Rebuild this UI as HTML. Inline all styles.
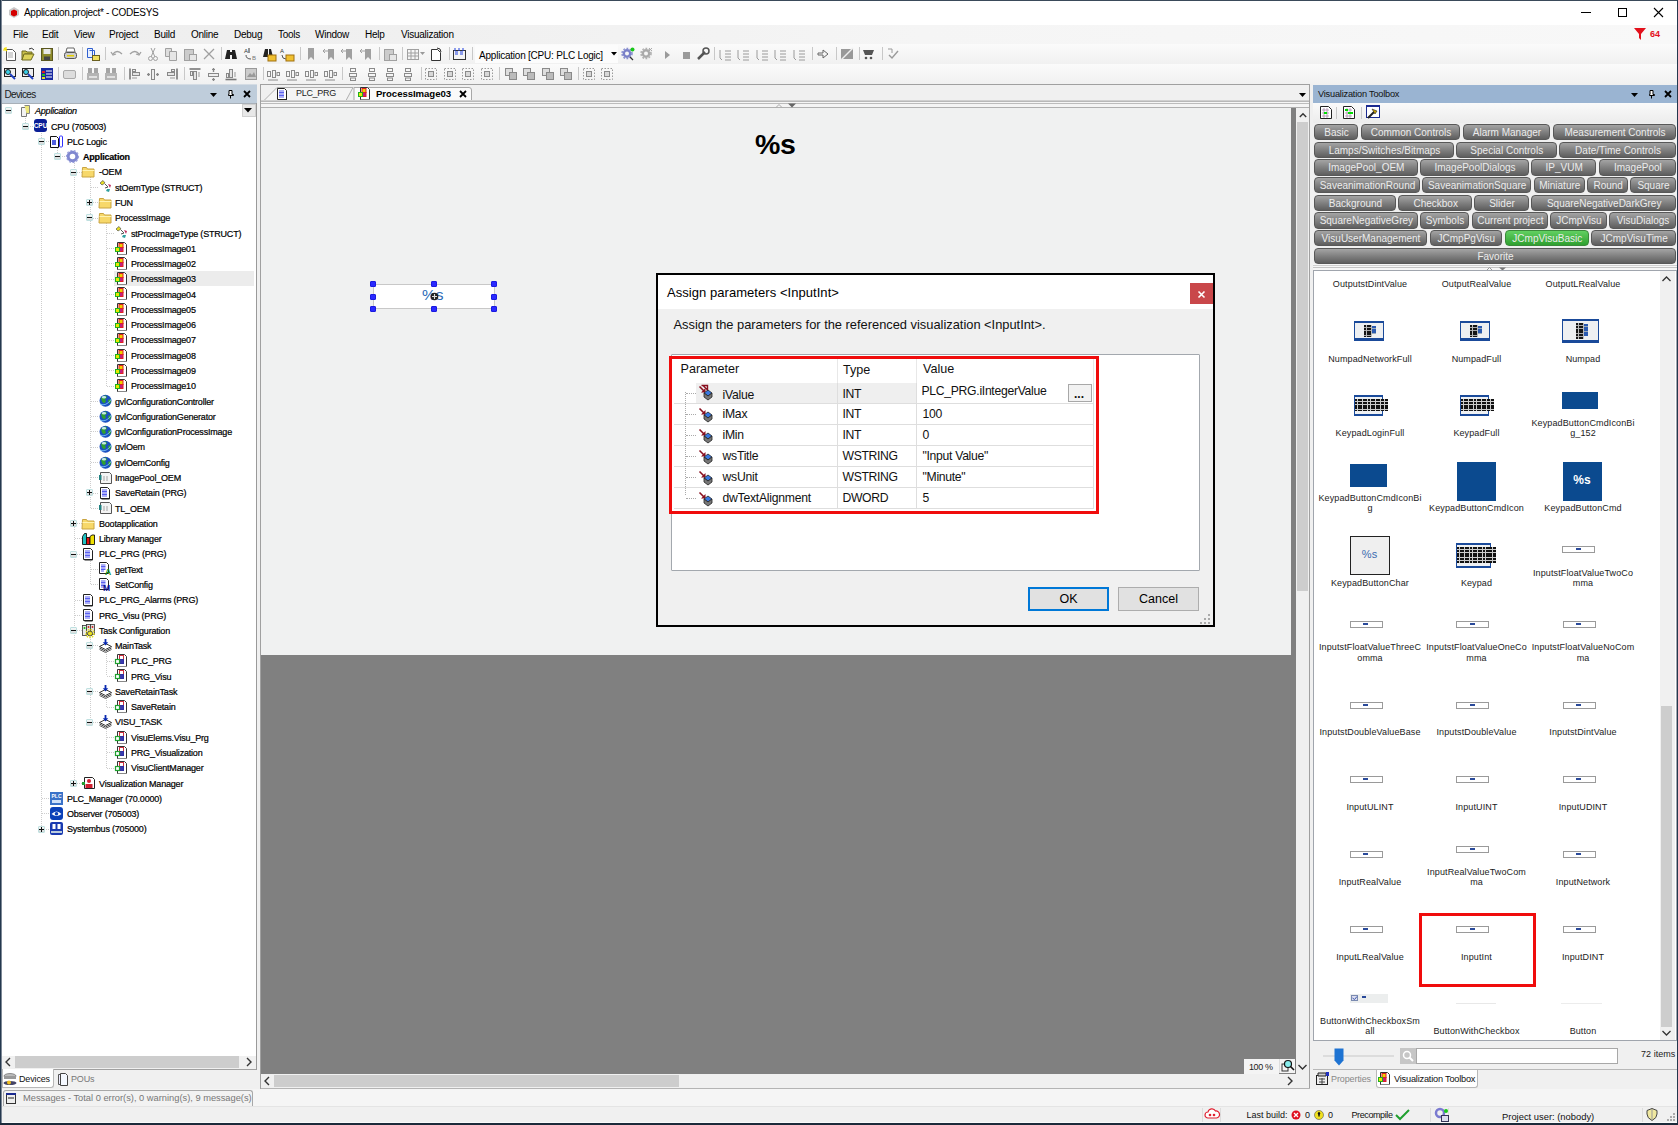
<!DOCTYPE html><html><head><meta charset="utf-8"><style>
html,body{margin:0;padding:0;}
body{width:1678px;height:1125px;position:relative;overflow:hidden;background:#f0f0f0;font-family:"Liberation Sans",sans-serif;color:#000;}
div{position:absolute;box-sizing:border-box;}
.t{position:absolute;white-space:nowrap;}
</style></head><body>

<div style="left:0px;top:0px;width:1678px;height:25px;background:#fff;"></div>
<div style="left:0px;top:25px;width:1678px;height:19px;background:linear-gradient(90deg,#eeeeee 0,#f0f0f0 25%,#f5f5f5 55%,#f8f8f8 100%);"></div>
<div style="left:0px;top:44px;width:1678px;height:20px;background:linear-gradient(#fbfbfb,#f1f1f1);"></div>
<div style="left:0px;top:64px;width:1678px;height:20px;background:linear-gradient(#fbfbfb,#f1f1f1);"></div>
<svg style="position:absolute;overflow:visible;left:7px;top:5px;" width="14" height="14" viewBox="0 0 14 14"><path d="M2 5 L7 2 L12 5 L12 10 L7 13 L2 10Z" fill="#c9c9c9"/><path d="M4 6 L7 4.5 L10 6 L10 10 L7 11.5 L4 10Z" fill="#d40000"/></svg>
<span class="t " style="left:24px;top:7.54px;font-size:10px;line-height:10px;letter-spacing:-0.3px;color:#000;">Application.project* - CODESYS</span>
<div style="left:1581px;top:12px;width:10px;height:1px;background:#000;"></div>
<div style="left:1618px;top:8px;width:9px;height:9px;border:1px solid #000;"></div>
<svg style="position:absolute;overflow:visible;left:1653px;top:7px;" width="11" height="11" viewBox="0 0 11 11"><path d="M1 1L10 10M10 1L1 10" stroke="#000" stroke-width="1.1"/></svg>
<svg style="position:absolute;overflow:visible;left:1634px;top:27px;" width="13" height="14" viewBox="0 0 13 14"><path d="M0 1 L12 1 L7 7 L7 13 L5 11 L5 7Z" fill="#e3101b"/></svg>
<span class="t " style="left:1650px;top:30.38px;font-size:9px;line-height:9px;letter-spacing:0px;color:#e3101b;font-weight:bold;">64</span>
<span class="t " style="left:13px;top:29.54px;font-size:10px;line-height:10px;letter-spacing:-0.25px;">File</span>
<span class="t " style="left:42px;top:29.54px;font-size:10px;line-height:10px;letter-spacing:-0.25px;">Edit</span>
<span class="t " style="left:74px;top:29.54px;font-size:10px;line-height:10px;letter-spacing:-0.25px;">View</span>
<span class="t " style="left:109px;top:29.54px;font-size:10px;line-height:10px;letter-spacing:-0.25px;">Project</span>
<span class="t " style="left:154px;top:29.54px;font-size:10px;line-height:10px;letter-spacing:-0.25px;">Build</span>
<span class="t " style="left:191px;top:29.54px;font-size:10px;line-height:10px;letter-spacing:-0.25px;">Online</span>
<span class="t " style="left:234px;top:29.54px;font-size:10px;line-height:10px;letter-spacing:-0.25px;">Debug</span>
<span class="t " style="left:278px;top:29.54px;font-size:10px;line-height:10px;letter-spacing:-0.25px;">Tools</span>
<span class="t " style="left:315px;top:29.54px;font-size:10px;line-height:10px;letter-spacing:-0.25px;">Window</span>
<span class="t " style="left:365px;top:29.54px;font-size:10px;line-height:10px;letter-spacing:-0.25px;">Help</span>
<span class="t " style="left:401px;top:29.54px;font-size:10px;line-height:10px;letter-spacing:-0.25px;">Visualization</span>
<svg style="position:absolute;overflow:visible;left:3px;top:47px;" width="15" height="15" viewBox="0 0 15 15"><path d="M3.5 2.5h6l3 3v8h-9z" fill="#fff" stroke="#555"/><path d="M5 6h5M5 8h5M5 10h5" stroke="#aaa"/><path d="M1 1l3 3M3 0v3M0 3h3" stroke="#f5e000" stroke-width="1.2"/></svg>
<svg style="position:absolute;overflow:visible;left:21px;top:47px;" width="15" height="15" viewBox="0 0 15 15"><path d="M1 4h4l1 1h5v2H4l-3 6z" fill="#c8c04a" stroke="#6e6a20"/><path d="M3 7h10l-3 6H1z" fill="#dcd35a" stroke="#6e6a20"/><path d="M8 2q3-2 5 1" stroke="#333" fill="none"/></svg>
<svg style="position:absolute;overflow:visible;left:40px;top:47px;" width="15" height="15" viewBox="0 0 15 15"><rect x="1.5" y="1.5" width="11" height="12" fill="#8d8a2c" stroke="#5a5720"/><rect x="3.5" y="2" width="7" height="5" fill="#e8e8e8"/><rect x="4" y="9.5" width="6" height="3.5" fill="#444"/></svg>
<svg style="position:absolute;overflow:visible;left:63px;top:47px;" width="15" height="15" viewBox="0 0 15 15"><path d="M4 1h7l1 4H3z" fill="#fff" stroke="#666"/><rect x="1.5" y="5.5" width="12" height="6" rx="2" fill="#ccc" stroke="#555"/><rect x="4" y="8" width="7" height="1.5" fill="#e5d000"/></svg>
<svg style="position:absolute;overflow:visible;left:86px;top:47px;" width="15" height="15" viewBox="0 0 15 15"><path d="M1.5 1.5h5v9h-5z" fill="#e8f0ff" stroke="#2f5fd0"/><path d="M3.5 3.5h5v7" fill="none" stroke="#2f5fd0"/><rect x="6.5" y="8.5" width="7" height="5" fill="#f0e060" stroke="#6a6020"/></svg>
<svg style="position:absolute;overflow:visible;left:110px;top:47px;" width="15" height="15" viewBox="0 0 15 15"><path d="M3 7q4-5 9 0" stroke="#a0a0a0" fill="none" stroke-width="1.3"/><path d="M1 5l2 3 3-1" stroke="#a0a0a0" fill="none" stroke-width="1.3"/></svg>
<svg style="position:absolute;overflow:visible;left:128px;top:47px;" width="15" height="15" viewBox="0 0 15 15"><path d="M2 7q5-5 9 0" stroke="#a0a0a0" fill="none" stroke-width="1.3"/><path d="M13 5l-2 3-3-1" stroke="#a0a0a0" fill="none" stroke-width="1.3"/></svg>
<svg style="position:absolute;overflow:visible;left:146px;top:47px;" width="15" height="15" viewBox="0 0 15 15"><path d="M5 1l4 9M9 1l-4 9" stroke="#a0a0a0"/><circle cx="4.5" cy="11.5" r="2" fill="none" stroke="#a0a0a0"/><circle cx="9.5" cy="11.5" r="2" fill="none" stroke="#a0a0a0"/></svg>
<svg style="position:absolute;overflow:visible;left:164px;top:47px;" width="15" height="15" viewBox="0 0 15 15"><path d="M1.5 1.5h6v8h-6z" fill="#ddd" stroke="#a0a0a0"/><path d="M5.5 4.5h7v9h-7z" fill="#e6e6e6" stroke="#a0a0a0"/></svg>
<svg style="position:absolute;overflow:visible;left:183px;top:47px;" width="15" height="15" viewBox="0 0 15 15"><rect x="1.5" y="2.5" width="9" height="11" fill="#ccc" stroke="#a0a0a0"/><rect x="6.5" y="7.5" width="7" height="6" fill="#e6e6e6" stroke="#a0a0a0"/></svg>
<svg style="position:absolute;overflow:visible;left:202px;top:47px;" width="15" height="15" viewBox="0 0 15 15"><path d="M2 2l10 10M12 2L2 12" stroke="#a0a0a0" stroke-width="1.3"/></svg>
<svg style="position:absolute;overflow:visible;left:224px;top:47px;" width="15" height="15" viewBox="0 0 15 15"><path d="M1 12l2-9h3v9zM13 12l-2-9H8v9z" fill="#222"/><rect x="5" y="5" width="4" height="3" fill="#222"/></svg>
<svg style="position:absolute;overflow:visible;left:243px;top:47px;" width="15" height="15" viewBox="0 0 15 15"><text x="1" y="6" font-size="6" font-family="Liberation Sans" fill="#333">A</text><text x="9" y="13" font-size="6" font-family="Liberation Sans" fill="#777">B</text><path d="M3 8q0 4 5 4" stroke="#555" fill="none"/><path d="M6 1v5" stroke="#333"/></svg>
<svg style="position:absolute;overflow:visible;left:262px;top:47px;" width="15" height="15" viewBox="0 0 15 15"><path d="M1 10l2-8h3v8zM11 10l-2-8H7v8z" fill="#222"/><rect x="6" y="8" width="8" height="6" fill="#f0c030" stroke="#a07010"/></svg>
<svg style="position:absolute;overflow:visible;left:280px;top:47px;" width="15" height="15" viewBox="0 0 15 15"><text x="0" y="6" font-size="6" font-family="Liberation Sans" fill="#333">A</text><path d="M2 8q0 4 4 4" stroke="#555" fill="none"/><rect x="6" y="8" width="8" height="6" fill="#f0c030" stroke="#a07010"/></svg>
<svg style="position:absolute;overflow:visible;left:304px;top:47px;" width="15" height="15" viewBox="0 0 15 15"><path d="M4 1h6v12l-3-3-3 3z" fill="#a0a0a0"/></svg>
<svg style="position:absolute;overflow:visible;left:322px;top:47px;" width="15" height="15" viewBox="0 0 15 15"><path d="M6 2h6v11l-3-3-3 3z" fill="#a0a0a0"/><path d="M1 4h5M1 4l2-2M1 4l2 2" stroke="#a0a0a0"/></svg>
<svg style="position:absolute;overflow:visible;left:340px;top:47px;" width="15" height="15" viewBox="0 0 15 15"><path d="M6 2h6v11l-3-3-3 3z" fill="#a0a0a0"/><path d="M1 4h5M1 4l2-2M1 4l2 2" stroke="#a0a0a0"/></svg>
<svg style="position:absolute;overflow:visible;left:359px;top:47px;" width="15" height="15" viewBox="0 0 15 15"><path d="M6 2h6v11l-3-3-3 3z" fill="#a0a0a0"/><path d="M1 4h5M1 4l2-2M1 4l2 2" stroke="#a0a0a0"/></svg>
<svg style="position:absolute;overflow:visible;left:383px;top:47px;" width="15" height="15" viewBox="0 0 15 15"><rect x="1.5" y="2.5" width="9" height="11" fill="#ccc" stroke="#a0a0a0"/><rect x="6.5" y="7.5" width="7" height="6" fill="#e6e6e6" stroke="#a0a0a0"/></svg>
<svg style="position:absolute;overflow:visible;left:406px;top:47px;" width="15" height="15" viewBox="0 0 15 15"><rect x="1.5" y="2.5" width="11" height="10" fill="none" stroke="#a0a0a0"/><path d="M1 6h12M1 9h12M5 3v10M9 3v10" stroke="#a0a0a0"/></svg>
<svg style="position:absolute;overflow:visible;left:429px;top:47px;" width="15" height="15" viewBox="0 0 15 15"><path d="M2.5 2.5h6l3 3v8h-9z" fill="#fff" stroke="#333"/><path d="M8 1q4 0 4 4" stroke="#333" fill="none"/></svg>
<svg style="position:absolute;overflow:visible;left:452px;top:47px;" width="15" height="15" viewBox="0 0 15 15"><rect x="1.5" y="3.5" width="12" height="9" fill="#f4f4f4" stroke="#333"/><path d="M3 5h3M8 5h3M3 7h3M8 7h3" stroke="#2040e0"/><path d="M3 1v3M7 1v3M11 1v3" stroke="#2040e0"/></svg>
<div style="left:58px;top:47px;width:1px;height:13px;background:#c8c8c8;"></div>
<div style="left:82px;top:47px;width:1px;height:13px;background:#c8c8c8;"></div>
<div style="left:105px;top:47px;width:1px;height:13px;background:#c8c8c8;"></div>
<div style="left:221px;top:47px;width:1px;height:13px;background:#c8c8c8;"></div>
<div style="left:300px;top:47px;width:1px;height:13px;background:#c8c8c8;"></div>
<div style="left:379px;top:47px;width:1px;height:13px;background:#c8c8c8;"></div>
<div style="left:402px;top:47px;width:1px;height:13px;background:#c8c8c8;"></div>
<div style="left:449px;top:47px;width:1px;height:13px;background:#c8c8c8;"></div>
<div style="left:472px;top:47px;width:1px;height:13px;background:#c8c8c8;"></div>
<svg style="position:absolute;overflow:visible;left:420px;top:52px;" width="6" height="4" viewBox="0 0 6 4"><path d="M0 0h5l-2.5 3z" fill="#999"/></svg>
<div style="left:475px;top:45px;width:143px;height:18px;background:#fcfcfc;"></div>
<span class="t " style="left:479px;top:50.53px;font-size:10px;line-height:10px;letter-spacing:-0.22px;">Application [CPU: PLC Logic]</span>
<svg style="position:absolute;overflow:visible;left:611px;top:52px;" width="6" height="4" viewBox="0 0 6 4"><path d="M0 0h6l-3 3.5z" fill="#000"/></svg>
<svg style="position:absolute;overflow:visible;left:621px;top:47px;" width="15" height="15" viewBox="0 0 15 15"><circle cx="6" cy="6.5" r="3.2" fill="none" stroke="#7a80c8" stroke-width="2.4"/><circle cx="6" cy="6.5" r="5" fill="none" stroke="#8a90d0" stroke-width="1.6" stroke-dasharray="1.8 1.4"/><circle cx="11.5" cy="2.5" r="2" fill="#18c818"/><path d="M9 10l3 3" stroke="#333" stroke-width="1.2"/></svg>
<svg style="position:absolute;overflow:visible;left:640px;top:47px;" width="15" height="15" viewBox="0 0 15 15"><circle cx="6" cy="6.5" r="3.2" fill="none" stroke="#aaa" stroke-width="2.4"/><circle cx="6" cy="6.5" r="5" fill="none" stroke="#b0b0b0" stroke-width="1.6" stroke-dasharray="1.8 1.4"/><path d="M9 1l3 3M12 1L9 4" stroke="#aaa"/></svg>
<svg style="position:absolute;overflow:visible;left:660px;top:47px;" width="15" height="15" viewBox="0 0 15 15"><path d="M5 4l5 4-5 4z" fill="#9a9a9a"/></svg>
<svg style="position:absolute;overflow:visible;left:679px;top:47px;" width="15" height="15" viewBox="0 0 15 15"><rect x="4" y="5" width="7" height="7" fill="#9a9a9a"/></svg>
<svg style="position:absolute;overflow:visible;left:696px;top:47px;" width="15" height="15" viewBox="0 0 15 15"><path d="M2 12l7-7" stroke="#555" stroke-width="2.5"/><circle cx="10" cy="4" r="3" fill="none" stroke="#555" stroke-width="1.5"/></svg>
<svg style="position:absolute;overflow:visible;left:718px;top:47px;" width="15" height="15" viewBox="0 0 15 15"><path d="M7 4h6M7 7h6M7 10h6M7 13h6" stroke="#9a9a9a"/><path d="M2 3v8l2 2" stroke="#9a9a9a" fill="none"/></svg>
<svg style="position:absolute;overflow:visible;left:736px;top:47px;" width="15" height="15" viewBox="0 0 15 15"><path d="M7 4h6M7 7h6M7 10h6M7 13h6" stroke="#9a9a9a"/><path d="M2 3v8l2 2" stroke="#9a9a9a" fill="none"/></svg>
<svg style="position:absolute;overflow:visible;left:755px;top:47px;" width="15" height="15" viewBox="0 0 15 15"><path d="M7 4h6M7 7h6M7 10h6M7 13h6" stroke="#9a9a9a"/><path d="M2 3v8l2 2" stroke="#9a9a9a" fill="none"/></svg>
<svg style="position:absolute;overflow:visible;left:773px;top:47px;" width="15" height="15" viewBox="0 0 15 15"><path d="M7 4h6M7 7h6M7 10h6M7 13h6" stroke="#9a9a9a"/><path d="M2 3v8l2 2" stroke="#9a9a9a" fill="none"/></svg>
<svg style="position:absolute;overflow:visible;left:792px;top:47px;" width="15" height="15" viewBox="0 0 15 15"><path d="M7 4h6M7 7h6M7 10h6M7 13h6" stroke="#9a9a9a"/><path d="M2 3v8l2 2" stroke="#9a9a9a" fill="none"/></svg>
<svg style="position:absolute;overflow:visible;left:816px;top:47px;" width="15" height="15" viewBox="0 0 15 15"><path d="M2 6h5V3l5 4-5 4V8H2z" fill="none" stroke="#666"/></svg>
<svg style="position:absolute;overflow:visible;left:840px;top:47px;" width="15" height="15" viewBox="0 0 15 15"><rect x="1" y="2" width="12" height="10" fill="#999"/><path d="M1 13L13 1" stroke="#eee" stroke-width="1.5"/></svg>
<svg style="position:absolute;overflow:visible;left:862px;top:47px;" width="15" height="15" viewBox="0 0 15 15"><path d="M1 3h11l-2 5H3z" fill="#555"/><circle cx="4" cy="11" r="1.3" fill="#555"/><circle cx="9" cy="11" r="1.3" fill="#555"/></svg>
<svg style="position:absolute;overflow:visible;left:886px;top:47px;" width="15" height="15" viewBox="0 0 15 15"><path d="M3 8l3 3 6-7" stroke="#9a9a9a" fill="none" stroke-width="1.4"/><path d="M2 2l4 0 0 4" stroke="#9a9a9a" fill="none"/></svg>
<div style="left:714px;top:47px;width:1px;height:13px;background:#c8c8c8;"></div>
<div style="left:836px;top:47px;width:1px;height:13px;background:#c8c8c8;"></div>
<div style="left:859px;top:47px;width:1px;height:13px;background:#c8c8c8;"></div>
<div style="left:882px;top:47px;width:1px;height:13px;background:#c8c8c8;"></div>
<div style="left:812px;top:47px;width:1px;height:13px;background:#c8c8c8;"></div>
<svg style="position:absolute;overflow:visible;left:3px;top:67px;" width="15" height="15" viewBox="0 0 15 15"><rect x="1.5" y="1.5" width="11" height="8" fill="#eee" stroke="#222"/><circle cx="5" cy="5" r="2.5" fill="#3ad0e8" stroke="#222"/><path d="M7 7l5 5" stroke="#2040c0" stroke-width="2"/></svg>
<svg style="position:absolute;overflow:visible;left:21px;top:67px;" width="15" height="15" viewBox="0 0 15 15"><rect x="1.5" y="1.5" width="11" height="8" fill="#eee" stroke="#222"/><circle cx="5" cy="5" r="2.5" fill="#3ad0e8" stroke="#222"/><path d="M7 7l5 5" stroke="#2040c0" stroke-width="2"/></svg>
<svg style="position:absolute;overflow:visible;left:40px;top:67px;" width="15" height="15" viewBox="0 0 15 15"><rect x="1" y="1" width="12" height="12" fill="#1a2aa0"/><rect x="2" y="4" width="3" height="2" fill="#e02020"/><rect x="2" y="7" width="3" height="2" fill="#20c020"/><rect x="2" y="10" width="3" height="2" fill="#e0e020"/><path d="M6 4h6M6 7h6M6 10h6" stroke="#fff"/></svg>
<svg style="position:absolute;overflow:visible;left:62px;top:67px;" width="15" height="15" viewBox="0 0 15 15"><rect x="1.5" y="3.5" width="12" height="8" rx="1.5" fill="#ddd" stroke="#aaa"/></svg>
<svg style="position:absolute;overflow:visible;left:86px;top:67px;" width="15" height="15" viewBox="0 0 15 15"><rect x="2" y="1" width="4" height="5" fill="#a4a4a4"/><rect x="8" y="1" width="4" height="5" fill="#a4a4a4"/><rect x="1" y="6" width="12" height="7" fill="#b4b4b4"/><rect x="3" y="9" width="8" height="2" fill="#e0e0e0"/></svg>
<svg style="position:absolute;overflow:visible;left:104px;top:67px;" width="15" height="15" viewBox="0 0 15 15"><rect x="2" y="1" width="4" height="5" fill="#a4a4a4"/><rect x="8" y="1" width="4" height="5" fill="#a4a4a4"/><rect x="1" y="6" width="12" height="7" fill="#b4b4b4"/><rect x="3" y="9" width="8" height="2" fill="#e0e0e0"/></svg>
<svg style="position:absolute;overflow:visible;left:128px;top:67px;" width="15" height="15" viewBox="0 0 15 15"><path d="M2 1.5v11" stroke="#777" stroke-width="1.6"/><rect x="4.5" y="2.5" width="3" height="2" fill="#eee" stroke="#888"/><rect x="4.5" y="5.5" width="7" height="3" fill="#e4e4e4" stroke="#888"/><path d="M4 11h5" stroke="#999"/></svg>
<svg style="position:absolute;overflow:visible;left:146px;top:67px;" width="15" height="15" viewBox="0 0 15 15"><rect x="5.5" y="2.5" width="3" height="10" fill="#eee" stroke="#888"/><path d="M1 7.5h3M10 7.5h3" stroke="#888" stroke-width="1.4"/><path d="M2.5 6v3M11.5 6v3" stroke="#888"/></svg>
<svg style="position:absolute;overflow:visible;left:165px;top:67px;" width="15" height="15" viewBox="0 0 15 15"><path d="M12 1.5v11" stroke="#777" stroke-width="1.6"/><rect x="6.5" y="2.5" width="3" height="2" fill="#eee" stroke="#888"/><rect x="2.5" y="5.5" width="7" height="3" fill="#e4e4e4" stroke="#888"/><path d="M5 11h5" stroke="#999"/></svg>
<svg style="position:absolute;overflow:visible;left:188px;top:67px;" width="15" height="15" viewBox="0 0 15 15"><path d="M1.5 2h11" stroke="#777" stroke-width="1.6"/><rect x="2.5" y="4.5" width="2" height="4" fill="#eee" stroke="#888"/><rect x="5.5" y="4.5" width="3" height="8" fill="#e4e4e4" stroke="#888"/><path d="M11 5v5" stroke="#999"/></svg>
<svg style="position:absolute;overflow:visible;left:206px;top:67px;" width="15" height="15" viewBox="0 0 15 15"><rect x="2.5" y="6.5" width="10" height="3" fill="#eee" stroke="#888"/><path d="M7.5 1v4M7.5 11v3" stroke="#888" stroke-width="1.4"/><path d="M6 2.5h3M6 12.5h3" stroke="#888"/></svg>
<svg style="position:absolute;overflow:visible;left:224px;top:67px;" width="15" height="15" viewBox="0 0 15 15"><path d="M1.5 12.5h11" stroke="#777" stroke-width="1.6"/><rect x="2.5" y="6.5" width="2" height="4" fill="#eee" stroke="#888"/><rect x="5.5" y="2.5" width="3" height="8" fill="#e4e4e4" stroke="#888"/><path d="M11 5v5" stroke="#999"/></svg>
<svg style="position:absolute;overflow:visible;left:244px;top:67px;" width="15" height="15" viewBox="0 0 15 15"><rect x="1.5" y="1.5" width="11" height="11" fill="#ccc" stroke="#999"/><path d="M3 10l3-4 2 2 2-3 2 5z" fill="#999"/></svg>
<svg style="position:absolute;overflow:visible;left:266px;top:67px;" width="15" height="15" viewBox="0 0 15 15"><rect x="1.5" y="4.5" width="3" height="5" fill="none" stroke="#8a8a8a"/><rect x="6.5" y="3.5" width="3" height="7" fill="none" stroke="#8a8a8a"/><rect x="11" y="5.5" width="2.5" height="3" fill="none" stroke="#8a8a8a"/><path d="M2 13h10" stroke="#8a8a8a"/></svg>
<svg style="position:absolute;overflow:visible;left:285px;top:67px;" width="15" height="15" viewBox="0 0 15 15"><rect x="1.5" y="4.5" width="3" height="5" fill="none" stroke="#8a8a8a"/><rect x="6.5" y="3.5" width="3" height="7" fill="none" stroke="#8a8a8a"/><rect x="11" y="5.5" width="2.5" height="3" fill="none" stroke="#8a8a8a"/><path d="M2 13h10" stroke="#8a8a8a"/></svg>
<svg style="position:absolute;overflow:visible;left:304px;top:67px;" width="15" height="15" viewBox="0 0 15 15"><rect x="1.5" y="4.5" width="3" height="5" fill="none" stroke="#8a8a8a"/><rect x="6.5" y="3.5" width="3" height="7" fill="none" stroke="#8a8a8a"/><rect x="11" y="5.5" width="2.5" height="3" fill="none" stroke="#8a8a8a"/><path d="M2 13h10" stroke="#8a8a8a"/></svg>
<svg style="position:absolute;overflow:visible;left:323px;top:67px;" width="15" height="15" viewBox="0 0 15 15"><rect x="1.5" y="4.5" width="3" height="5" fill="none" stroke="#8a8a8a"/><rect x="6.5" y="3.5" width="3" height="7" fill="none" stroke="#8a8a8a"/><rect x="11" y="5.5" width="2.5" height="3" fill="none" stroke="#8a8a8a"/><path d="M2 13h10" stroke="#8a8a8a"/></svg>
<svg style="position:absolute;overflow:visible;left:346px;top:67px;" width="15" height="15" viewBox="0 0 15 15"><rect x="4.5" y="1.5" width="5" height="3" fill="none" stroke="#8a8a8a"/><rect x="3.5" y="6.5" width="7" height="3" fill="none" stroke="#8a8a8a"/><rect x="4.5" y="11" width="5" height="2.5" fill="none" stroke="#8a8a8a"/></svg>
<svg style="position:absolute;overflow:visible;left:365px;top:67px;" width="15" height="15" viewBox="0 0 15 15"><rect x="4.5" y="1.5" width="5" height="3" fill="none" stroke="#8a8a8a"/><rect x="3.5" y="6.5" width="7" height="3" fill="none" stroke="#8a8a8a"/><rect x="4.5" y="11" width="5" height="2.5" fill="none" stroke="#8a8a8a"/></svg>
<svg style="position:absolute;overflow:visible;left:383px;top:67px;" width="15" height="15" viewBox="0 0 15 15"><rect x="4.5" y="1.5" width="5" height="3" fill="none" stroke="#8a8a8a"/><rect x="3.5" y="6.5" width="7" height="3" fill="none" stroke="#8a8a8a"/><rect x="4.5" y="11" width="5" height="2.5" fill="none" stroke="#8a8a8a"/></svg>
<svg style="position:absolute;overflow:visible;left:401px;top:67px;" width="15" height="15" viewBox="0 0 15 15"><rect x="4.5" y="1.5" width="5" height="3" fill="none" stroke="#8a8a8a"/><rect x="3.5" y="6.5" width="7" height="3" fill="none" stroke="#8a8a8a"/><rect x="4.5" y="11" width="5" height="2.5" fill="none" stroke="#8a8a8a"/></svg>
<svg style="position:absolute;overflow:visible;left:424px;top:67px;" width="15" height="15" viewBox="0 0 15 15"><rect x="1.5" y="1.5" width="11" height="11" fill="none" stroke="#9a9a9a" stroke-dasharray="1.5 1.5"/><rect x="4.5" y="4.5" width="5" height="5" fill="#d8d8d8" stroke="#8a8a8a"/></svg>
<svg style="position:absolute;overflow:visible;left:443px;top:67px;" width="15" height="15" viewBox="0 0 15 15"><rect x="1.5" y="1.5" width="11" height="11" fill="none" stroke="#9a9a9a" stroke-dasharray="1.5 1.5"/><rect x="4.5" y="4.5" width="5" height="5" fill="#d8d8d8" stroke="#8a8a8a"/></svg>
<svg style="position:absolute;overflow:visible;left:461px;top:67px;" width="15" height="15" viewBox="0 0 15 15"><rect x="1.5" y="1.5" width="11" height="11" fill="none" stroke="#9a9a9a" stroke-dasharray="1.5 1.5"/><rect x="4.5" y="4.5" width="5" height="5" fill="#d8d8d8" stroke="#8a8a8a"/></svg>
<svg style="position:absolute;overflow:visible;left:480px;top:67px;" width="15" height="15" viewBox="0 0 15 15"><rect x="1.5" y="1.5" width="11" height="11" fill="none" stroke="#9a9a9a" stroke-dasharray="1.5 1.5"/><rect x="4.5" y="4.5" width="5" height="5" fill="#d8d8d8" stroke="#8a8a8a"/></svg>
<svg style="position:absolute;overflow:visible;left:504px;top:67px;" width="15" height="15" viewBox="0 0 15 15"><rect x="1.5" y="1.5" width="7" height="7" fill="#ddd" stroke="#8a8a8a"/><rect x="5.5" y="5.5" width="7" height="7" fill="#bbb" stroke="#8a8a8a"/></svg>
<svg style="position:absolute;overflow:visible;left:522px;top:67px;" width="15" height="15" viewBox="0 0 15 15"><rect x="1.5" y="1.5" width="7" height="7" fill="#ddd" stroke="#8a8a8a"/><rect x="5.5" y="5.5" width="7" height="7" fill="#bbb" stroke="#8a8a8a"/></svg>
<svg style="position:absolute;overflow:visible;left:541px;top:67px;" width="15" height="15" viewBox="0 0 15 15"><rect x="1.5" y="1.5" width="7" height="7" fill="#ddd" stroke="#8a8a8a"/><rect x="5.5" y="5.5" width="7" height="7" fill="#bbb" stroke="#8a8a8a"/></svg>
<svg style="position:absolute;overflow:visible;left:559px;top:67px;" width="15" height="15" viewBox="0 0 15 15"><rect x="1.5" y="1.5" width="7" height="7" fill="#ddd" stroke="#8a8a8a"/><rect x="5.5" y="5.5" width="7" height="7" fill="#bbb" stroke="#8a8a8a"/></svg>
<svg style="position:absolute;overflow:visible;left:582px;top:67px;" width="15" height="15" viewBox="0 0 15 15"><rect x="1.5" y="1.5" width="11" height="11" fill="none" stroke="#9a9a9a" stroke-dasharray="1.5 1.5"/><rect x="4.5" y="4.5" width="5" height="5" fill="#d8d8d8" stroke="#8a8a8a"/></svg>
<svg style="position:absolute;overflow:visible;left:600px;top:67px;" width="15" height="15" viewBox="0 0 15 15"><rect x="1.5" y="1.5" width="11" height="11" fill="none" stroke="#9a9a9a" stroke-dasharray="1.5 1.5"/><rect x="4.5" y="4.5" width="5" height="5" fill="#d8d8d8" stroke="#8a8a8a"/></svg>
<div style="left:58px;top:67px;width:1px;height:13px;background:#c8c8c8;"></div>
<div style="left:82px;top:67px;width:1px;height:13px;background:#c8c8c8;"></div>
<div style="left:124px;top:67px;width:1px;height:13px;background:#c8c8c8;"></div>
<div style="left:184px;top:67px;width:1px;height:13px;background:#c8c8c8;"></div>
<div style="left:263px;top:67px;width:1px;height:13px;background:#c8c8c8;"></div>
<div style="left:342px;top:67px;width:1px;height:13px;background:#c8c8c8;"></div>
<div style="left:421px;top:67px;width:1px;height:13px;background:#c8c8c8;"></div>
<div style="left:499px;top:67px;width:1px;height:13px;background:#c8c8c8;"></div>
<div style="left:578px;top:67px;width:1px;height:13px;background:#c8c8c8;"></div>
<div style="left:2px;top:84px;width:255px;height:20px;background:#bfcddb;border-top:1px solid #d4dce4;border-bottom:1px solid #a8b0b8;"></div>
<span class="t " style="left:4.5px;top:89.53px;font-size:10px;line-height:10px;letter-spacing:-0.65px;color:#1a1a1a;">Devices</span>
<svg style="position:absolute;overflow:visible;left:210px;top:93px;" width="8" height="5" viewBox="0 0 8 5"><path d="M0 0h7l-3.5 4z" fill="#000"/></svg>
<svg style="position:absolute;overflow:visible;left:227px;top:90px;" width="7" height="9" viewBox="0 0 7 9"><path d="M2 0.5h3v4h1.5v1h-5v-1H2z" stroke="#000" stroke-width="1" fill="#fff"/><path d="M3.5 5.5v3" stroke="#000"/></svg>
<svg style="position:absolute;overflow:visible;left:243px;top:90px;" width="8" height="8" viewBox="0 0 8 8"><path d="M1 1l6 6M7 1L1 7" stroke="#000" stroke-width="1.8"/></svg>
<div style="left:2px;top:104px;width:255px;height:952px;background:#fff;border-right:1px solid #9a9a9a;"></div>
<div style="left:242px;top:104px;width:14px;height:13px;background:#e8e8e8;border:1px solid #d0d0d0;"></div>
<svg style="position:absolute;overflow:visible;left:244px;top:108px;" width="9" height="5" viewBox="0 0 9 5"><path d="M0 0h8l-4 4.5z" fill="#000"/></svg>
<div style="left:25px;top:115.6px;width:1px;height:10.280000000000001px;background:repeating-linear-gradient(#cdcdcd 0 1px,transparent 1px 2px);"></div>
<div style="left:41px;top:130.88px;width:1px;height:697.88px;background:repeating-linear-gradient(#cdcdcd 0 1px,transparent 1px 2px);"></div>
<div style="left:57px;top:146.16px;width:1px;height:10.280000000000001px;background:repeating-linear-gradient(#cdcdcd 0 1px,transparent 1px 2px);"></div>
<div style="left:74px;top:161.44px;width:1px;height:621.48px;background:repeating-linear-gradient(#cdcdcd 0 1px,transparent 1px 2px);"></div>
<div style="left:90px;top:176.72px;width:1px;height:331.15999999999997px;background:repeating-linear-gradient(#cdcdcd 0 1px,transparent 1px 2px);"></div>
<div style="left:106px;top:222.56px;width:1px;height:163.07999999999998px;background:repeating-linear-gradient(#cdcdcd 0 1px,transparent 1px 2px);"></div>
<div style="left:90px;top:558.72px;width:1px;height:25.559999999999945px;background:repeating-linear-gradient(#cdcdcd 0 1px,transparent 1px 2px);"></div>
<div style="left:90px;top:635.12px;width:1px;height:86.67999999999995px;background:repeating-linear-gradient(#cdcdcd 0 1px,transparent 1px 2px);"></div>
<div style="left:106px;top:650.4px;width:1px;height:25.56000000000006px;background:repeating-linear-gradient(#cdcdcd 0 1px,transparent 1px 2px);"></div>
<div style="left:106px;top:696.24px;width:1px;height:10.279999999999973px;background:repeating-linear-gradient(#cdcdcd 0 1px,transparent 1px 2px);"></div>
<div style="left:106px;top:726.8px;width:1px;height:40.84000000000003px;background:repeating-linear-gradient(#cdcdcd 0 1px,transparent 1px 2px);"></div>
<div style="left:5px;top:107px;width:7px;height:7px;background:linear-gradient(#f6f9f9,#d4d8d8);border:1px solid #bfe0e0;border-radius:1px;"></div>
<div style="left:6px;top:110px;width:5px;height:1px;background:#111;"></div>
<svg style="position:absolute;overflow:visible;left:18px;top:104px;" width="13" height="13" viewBox="0 0 13 13"><path d="M3.5 3.5h5v9h-5z" fill="#f3f3f3" stroke="#777"/><path d="M6.5 1.5h5v8h-3" fill="#ece67a" stroke="#888"/></svg>
<span class="t " style="left:35px;top:107.28px;font-size:9px;line-height:9px;letter-spacing:-0.2px;color:#000;-webkit-text-stroke:0.2px #000;font-style:italic;">Application</span>
<div style="left:26px;top:126px;width:8px;height:1px;background:repeating-linear-gradient(90deg,#cdcdcd 0 1px,transparent 1px 2px);"></div>
<div style="left:22px;top:123px;width:7px;height:7px;background:linear-gradient(#f6f9f9,#d4d8d8);border:1px solid #bfe0e0;border-radius:1px;"></div>
<div style="left:23px;top:126px;width:5px;height:1px;background:#111;"></div>
<svg style="position:absolute;overflow:visible;left:34px;top:119px;" width="13" height="13" viewBox="0 0 13 13"><rect x="0" y="0" width="13" height="13" rx="3" fill="#0a1e96"/><text x="6.5" y="9" text-anchor="middle" font-size="6.5" font-family="Liberation Sans" fill="#fff" font-weight="bold">CPU</text></svg>
<span class="t " style="left:51px;top:122.56px;font-size:9px;line-height:9px;letter-spacing:-0.2px;color:#000;-webkit-text-stroke:0.2px #000;">CPU (705003)</span>
<div style="left:42px;top:141px;width:8px;height:1px;background:repeating-linear-gradient(90deg,#cdcdcd 0 1px,transparent 1px 2px);"></div>
<div style="left:38px;top:138px;width:7px;height:7px;background:linear-gradient(#f6f9f9,#d4d8d8);border:1px solid #bfe0e0;border-radius:1px;"></div>
<div style="left:39px;top:141px;width:5px;height:1px;background:#111;"></div>
<svg style="position:absolute;overflow:visible;left:50px;top:135px;" width="13" height="13" viewBox="0 0 13 13"><path d="M0.5 1.5h6l2 2v9h-8z" fill="#fff" stroke="#111"/><rect x="2" y="5" width="4" height="5" fill="#5060e0"/><rect x="9.5" y="1" width="3" height="11" rx="1" fill="none" stroke="#3030ff"/></svg>
<span class="t " style="left:67px;top:137.84px;font-size:9px;line-height:9px;letter-spacing:-0.2px;color:#000;-webkit-text-stroke:0.2px #000;">PLC Logic</span>
<div style="left:58px;top:156px;width:8px;height:1px;background:repeating-linear-gradient(90deg,#cdcdcd 0 1px,transparent 1px 2px);"></div>
<div style="left:54px;top:153px;width:7px;height:7px;background:linear-gradient(#f6f9f9,#d4d8d8);border:1px solid #bfe0e0;border-radius:1px;"></div>
<div style="left:55px;top:156px;width:5px;height:1px;background:#111;"></div>
<svg style="position:absolute;overflow:visible;left:66px;top:150px;" width="13" height="13" viewBox="0 0 13 13"><circle cx="6.5" cy="6.5" r="4.3" fill="none" stroke="#8088d0" stroke-width="3"/><circle cx="6.5" cy="6.5" r="6" fill="none" stroke="#9aa0dc" stroke-width="1.2" stroke-dasharray="2 1.6"/></svg>
<span class="t " style="left:83px;top:153.12px;font-size:9px;line-height:9px;letter-spacing:-0.2px;color:#000;-webkit-text-stroke:0.2px #000;font-weight:bold;">Application</span>
<div style="left:75px;top:172px;width:8px;height:1px;background:repeating-linear-gradient(90deg,#cdcdcd 0 1px,transparent 1px 2px);"></div>
<div style="left:70px;top:169px;width:7px;height:7px;background:linear-gradient(#f6f9f9,#d4d8d8);border:1px solid #bfe0e0;border-radius:1px;"></div>
<div style="left:71px;top:172px;width:5px;height:1px;background:#111;"></div>
<svg style="position:absolute;overflow:visible;left:82px;top:165px;" width="13" height="13" viewBox="0 0 13 13"><path d="M0.5 2.5h4l1 1.5h6.5v8h-12z" fill="#f7d86a" stroke="#c9a441"/><path d="M0.5 5.5h12" stroke="#fff3b0"/></svg>
<span class="t " style="left:99px;top:168.40px;font-size:9px;line-height:9px;letter-spacing:-0.2px;color:#000;-webkit-text-stroke:0.2px #000;">-OEM</span>
<div style="left:91px;top:187px;width:8px;height:1px;background:repeating-linear-gradient(90deg,#cdcdcd 0 1px,transparent 1px 2px);"></div>
<svg style="position:absolute;overflow:visible;left:99px;top:180px;" width="13" height="13" viewBox="0 0 13 13"><path d="M1 3l3-2.5 2 2.5-3 2z" fill="#e8e020" stroke="#555" stroke-width="0.7"/><path d="M6 4l3 3M6 8l3-1" stroke="#555"/><path d="M9 4l3 1-1 3z" fill="#c03060"/><path d="M8 9l3 0-1 3-3-1z" fill="#30a0a0"/></svg>
<span class="t " style="left:115px;top:183.68px;font-size:9px;line-height:9px;letter-spacing:-0.2px;color:#000;-webkit-text-stroke:0.2px #000;">stOemType (STRUCT)</span>
<div style="left:91px;top:202px;width:8px;height:1px;background:repeating-linear-gradient(90deg,#cdcdcd 0 1px,transparent 1px 2px);"></div>
<div style="left:86px;top:199px;width:7px;height:7px;background:linear-gradient(#f6f9f9,#d4d8d8);border:1px solid #bfe0e0;border-radius:1px;"></div>
<div style="left:87px;top:202px;width:5px;height:1px;background:#111;"></div>
<div style="left:89px;top:200px;width:1px;height:5px;background:#111;"></div>
<svg style="position:absolute;overflow:visible;left:99px;top:196px;" width="13" height="13" viewBox="0 0 13 13"><path d="M0.5 2.5h4l1 1.5h6.5v8h-12z" fill="#f7d86a" stroke="#c9a441"/><path d="M0.5 5.5h12" stroke="#fff3b0"/></svg>
<span class="t " style="left:115px;top:198.96px;font-size:9px;line-height:9px;letter-spacing:-0.2px;color:#000;-webkit-text-stroke:0.2px #000;">FUN</span>
<div style="left:91px;top:218px;width:8px;height:1px;background:repeating-linear-gradient(90deg,#cdcdcd 0 1px,transparent 1px 2px);"></div>
<div style="left:86px;top:214px;width:7px;height:7px;background:linear-gradient(#f6f9f9,#d4d8d8);border:1px solid #bfe0e0;border-radius:1px;"></div>
<div style="left:87px;top:217px;width:5px;height:1px;background:#111;"></div>
<svg style="position:absolute;overflow:visible;left:99px;top:211px;" width="13" height="13" viewBox="0 0 13 13"><path d="M0.5 2.5h4l1 1.5h6.5v8h-12z" fill="#f7d86a" stroke="#c9a441"/><path d="M0.5 5.5h12" stroke="#fff3b0"/></svg>
<span class="t " style="left:115px;top:214.24px;font-size:9px;line-height:9px;letter-spacing:-0.2px;color:#000;-webkit-text-stroke:0.2px #000;">ProcessImage</span>
<div style="left:107px;top:233px;width:8px;height:1px;background:repeating-linear-gradient(90deg,#cdcdcd 0 1px,transparent 1px 2px);"></div>
<svg style="position:absolute;overflow:visible;left:115px;top:226px;" width="13" height="13" viewBox="0 0 13 13"><path d="M1 3l3-2.5 2 2.5-3 2z" fill="#e8e020" stroke="#555" stroke-width="0.7"/><path d="M6 4l3 3M6 8l3-1" stroke="#555"/><path d="M9 4l3 1-1 3z" fill="#c03060"/><path d="M8 9l3 0-1 3-3-1z" fill="#30a0a0"/></svg>
<span class="t " style="left:131px;top:229.52px;font-size:9px;line-height:9px;letter-spacing:-0.2px;color:#000;-webkit-text-stroke:0.2px #000;">stProcImageType (STRUCT)</span>
<div style="left:107px;top:248px;width:8px;height:1px;background:repeating-linear-gradient(90deg,#cdcdcd 0 1px,transparent 1px 2px);"></div>
<svg style="position:absolute;overflow:visible;left:115px;top:242px;" width="13" height="13" viewBox="0 0 13 13"><path d="M2.5 0.5h7l2 2v10h-9z" fill="#fff" stroke="#333"/><path d="M3 12.5h9" stroke="#888"/><rect x="4" y="1.5" width="4" height="4" fill="#f0d000" stroke="#e02020"/><rect x="4" y="5.5" width="4" height="4" fill="#c02080" stroke="#e02020"/><rect x="0.5" y="5.5" width="4" height="4" fill="#e8e800" stroke="#20b020"/></svg>
<span class="t " style="left:131px;top:244.80px;font-size:9px;line-height:9px;letter-spacing:-0.2px;color:#000;-webkit-text-stroke:0.2px #000;">ProcessImage01</span>
<div style="left:107px;top:263px;width:8px;height:1px;background:repeating-linear-gradient(90deg,#cdcdcd 0 1px,transparent 1px 2px);"></div>
<svg style="position:absolute;overflow:visible;left:115px;top:257px;" width="13" height="13" viewBox="0 0 13 13"><path d="M2.5 0.5h7l2 2v10h-9z" fill="#fff" stroke="#333"/><path d="M3 12.5h9" stroke="#888"/><rect x="4" y="1.5" width="4" height="4" fill="#f0d000" stroke="#e02020"/><rect x="4" y="5.5" width="4" height="4" fill="#c02080" stroke="#e02020"/><rect x="0.5" y="5.5" width="4" height="4" fill="#e8e800" stroke="#20b020"/></svg>
<span class="t " style="left:131px;top:260.08px;font-size:9px;line-height:9px;letter-spacing:-0.2px;color:#000;-webkit-text-stroke:0.2px #000;">ProcessImage02</span>
<div style="left:107px;top:279px;width:8px;height:1px;background:repeating-linear-gradient(90deg,#cdcdcd 0 1px,transparent 1px 2px);"></div>
<div style="left:114px;top:271px;width:140px;height:15px;background:#ececec;"></div>
<svg style="position:absolute;overflow:visible;left:115px;top:272px;" width="13" height="13" viewBox="0 0 13 13"><path d="M2.5 0.5h7l2 2v10h-9z" fill="#fff" stroke="#333"/><path d="M3 12.5h9" stroke="#888"/><rect x="4" y="1.5" width="4" height="4" fill="#f0d000" stroke="#e02020"/><rect x="4" y="5.5" width="4" height="4" fill="#c02080" stroke="#e02020"/><rect x="0.5" y="5.5" width="4" height="4" fill="#e8e800" stroke="#20b020"/></svg>
<span class="t " style="left:131px;top:275.36px;font-size:9px;line-height:9px;letter-spacing:-0.2px;color:#000;-webkit-text-stroke:0.2px #000;">ProcessImage03</span>
<div style="left:107px;top:294px;width:8px;height:1px;background:repeating-linear-gradient(90deg,#cdcdcd 0 1px,transparent 1px 2px);"></div>
<svg style="position:absolute;overflow:visible;left:115px;top:287px;" width="13" height="13" viewBox="0 0 13 13"><path d="M2.5 0.5h7l2 2v10h-9z" fill="#fff" stroke="#333"/><path d="M3 12.5h9" stroke="#888"/><rect x="4" y="1.5" width="4" height="4" fill="#f0d000" stroke="#e02020"/><rect x="4" y="5.5" width="4" height="4" fill="#c02080" stroke="#e02020"/><rect x="0.5" y="5.5" width="4" height="4" fill="#e8e800" stroke="#20b020"/></svg>
<span class="t " style="left:131px;top:290.64px;font-size:9px;line-height:9px;letter-spacing:-0.2px;color:#000;-webkit-text-stroke:0.2px #000;">ProcessImage04</span>
<div style="left:107px;top:309px;width:8px;height:1px;background:repeating-linear-gradient(90deg,#cdcdcd 0 1px,transparent 1px 2px);"></div>
<svg style="position:absolute;overflow:visible;left:115px;top:303px;" width="13" height="13" viewBox="0 0 13 13"><path d="M2.5 0.5h7l2 2v10h-9z" fill="#fff" stroke="#333"/><path d="M3 12.5h9" stroke="#888"/><rect x="4" y="1.5" width="4" height="4" fill="#f0d000" stroke="#e02020"/><rect x="4" y="5.5" width="4" height="4" fill="#c02080" stroke="#e02020"/><rect x="0.5" y="5.5" width="4" height="4" fill="#e8e800" stroke="#20b020"/></svg>
<span class="t " style="left:131px;top:305.92px;font-size:9px;line-height:9px;letter-spacing:-0.2px;color:#000;-webkit-text-stroke:0.2px #000;">ProcessImage05</span>
<div style="left:107px;top:325px;width:8px;height:1px;background:repeating-linear-gradient(90deg,#cdcdcd 0 1px,transparent 1px 2px);"></div>
<svg style="position:absolute;overflow:visible;left:115px;top:318px;" width="13" height="13" viewBox="0 0 13 13"><path d="M2.5 0.5h7l2 2v10h-9z" fill="#fff" stroke="#333"/><path d="M3 12.5h9" stroke="#888"/><rect x="4" y="1.5" width="4" height="4" fill="#f0d000" stroke="#e02020"/><rect x="4" y="5.5" width="4" height="4" fill="#c02080" stroke="#e02020"/><rect x="0.5" y="5.5" width="4" height="4" fill="#e8e800" stroke="#20b020"/></svg>
<span class="t " style="left:131px;top:321.20px;font-size:9px;line-height:9px;letter-spacing:-0.2px;color:#000;-webkit-text-stroke:0.2px #000;">ProcessImage06</span>
<div style="left:107px;top:340px;width:8px;height:1px;background:repeating-linear-gradient(90deg,#cdcdcd 0 1px,transparent 1px 2px);"></div>
<svg style="position:absolute;overflow:visible;left:115px;top:333px;" width="13" height="13" viewBox="0 0 13 13"><path d="M2.5 0.5h7l2 2v10h-9z" fill="#fff" stroke="#333"/><path d="M3 12.5h9" stroke="#888"/><rect x="4" y="1.5" width="4" height="4" fill="#f0d000" stroke="#e02020"/><rect x="4" y="5.5" width="4" height="4" fill="#c02080" stroke="#e02020"/><rect x="0.5" y="5.5" width="4" height="4" fill="#e8e800" stroke="#20b020"/></svg>
<span class="t " style="left:131px;top:336.48px;font-size:9px;line-height:9px;letter-spacing:-0.2px;color:#000;-webkit-text-stroke:0.2px #000;">ProcessImage07</span>
<div style="left:107px;top:355px;width:8px;height:1px;background:repeating-linear-gradient(90deg,#cdcdcd 0 1px,transparent 1px 2px);"></div>
<svg style="position:absolute;overflow:visible;left:115px;top:349px;" width="13" height="13" viewBox="0 0 13 13"><path d="M2.5 0.5h7l2 2v10h-9z" fill="#fff" stroke="#333"/><path d="M3 12.5h9" stroke="#888"/><rect x="4" y="1.5" width="4" height="4" fill="#f0d000" stroke="#e02020"/><rect x="4" y="5.5" width="4" height="4" fill="#c02080" stroke="#e02020"/><rect x="0.5" y="5.5" width="4" height="4" fill="#e8e800" stroke="#20b020"/></svg>
<span class="t " style="left:131px;top:351.76px;font-size:9px;line-height:9px;letter-spacing:-0.2px;color:#000;-webkit-text-stroke:0.2px #000;">ProcessImage08</span>
<div style="left:107px;top:370px;width:8px;height:1px;background:repeating-linear-gradient(90deg,#cdcdcd 0 1px,transparent 1px 2px);"></div>
<svg style="position:absolute;overflow:visible;left:115px;top:364px;" width="13" height="13" viewBox="0 0 13 13"><path d="M2.5 0.5h7l2 2v10h-9z" fill="#fff" stroke="#333"/><path d="M3 12.5h9" stroke="#888"/><rect x="4" y="1.5" width="4" height="4" fill="#f0d000" stroke="#e02020"/><rect x="4" y="5.5" width="4" height="4" fill="#c02080" stroke="#e02020"/><rect x="0.5" y="5.5" width="4" height="4" fill="#e8e800" stroke="#20b020"/></svg>
<span class="t " style="left:131px;top:367.04px;font-size:9px;line-height:9px;letter-spacing:-0.2px;color:#000;-webkit-text-stroke:0.2px #000;">ProcessImage09</span>
<div style="left:107px;top:386px;width:8px;height:1px;background:repeating-linear-gradient(90deg,#cdcdcd 0 1px,transparent 1px 2px);"></div>
<svg style="position:absolute;overflow:visible;left:115px;top:379px;" width="13" height="13" viewBox="0 0 13 13"><path d="M2.5 0.5h7l2 2v10h-9z" fill="#fff" stroke="#333"/><path d="M3 12.5h9" stroke="#888"/><rect x="4" y="1.5" width="4" height="4" fill="#f0d000" stroke="#e02020"/><rect x="4" y="5.5" width="4" height="4" fill="#c02080" stroke="#e02020"/><rect x="0.5" y="5.5" width="4" height="4" fill="#e8e800" stroke="#20b020"/></svg>
<span class="t " style="left:131px;top:382.32px;font-size:9px;line-height:9px;letter-spacing:-0.2px;color:#000;-webkit-text-stroke:0.2px #000;">ProcessImage10</span>
<div style="left:91px;top:401px;width:8px;height:1px;background:repeating-linear-gradient(90deg,#cdcdcd 0 1px,transparent 1px 2px);"></div>
<svg style="position:absolute;overflow:visible;left:99px;top:394px;" width="13" height="13" viewBox="0 0 13 13"><circle cx="6.5" cy="6.8" r="6" fill="#1a50c0"/><path d="M2 4q2-3 5-2.5l1 2-2 2 1 2-2 2-2-2z" fill="#30a030"/><path d="M9 6l2.5-1 .5 3-2 2z" fill="#30a030"/><ellipse cx="5" cy="3.2" rx="2.2" ry="1.2" fill="#d8f0ff" opacity="0.9"/><path d="M1 10q6 3 11.5-5" stroke="#8ad0ff" fill="none" stroke-width="0.8"/></svg>
<span class="t " style="left:115px;top:397.60px;font-size:9px;line-height:9px;letter-spacing:-0.2px;color:#000;-webkit-text-stroke:0.2px #000;">gvlConfigurationController</span>
<div style="left:91px;top:416px;width:8px;height:1px;background:repeating-linear-gradient(90deg,#cdcdcd 0 1px,transparent 1px 2px);"></div>
<svg style="position:absolute;overflow:visible;left:99px;top:410px;" width="13" height="13" viewBox="0 0 13 13"><circle cx="6.5" cy="6.8" r="6" fill="#1a50c0"/><path d="M2 4q2-3 5-2.5l1 2-2 2 1 2-2 2-2-2z" fill="#30a030"/><path d="M9 6l2.5-1 .5 3-2 2z" fill="#30a030"/><ellipse cx="5" cy="3.2" rx="2.2" ry="1.2" fill="#d8f0ff" opacity="0.9"/><path d="M1 10q6 3 11.5-5" stroke="#8ad0ff" fill="none" stroke-width="0.8"/></svg>
<span class="t " style="left:115px;top:412.88px;font-size:9px;line-height:9px;letter-spacing:-0.2px;color:#000;-webkit-text-stroke:0.2px #000;">gvlConfigurationGenerator</span>
<div style="left:91px;top:431px;width:8px;height:1px;background:repeating-linear-gradient(90deg,#cdcdcd 0 1px,transparent 1px 2px);"></div>
<svg style="position:absolute;overflow:visible;left:99px;top:425px;" width="13" height="13" viewBox="0 0 13 13"><circle cx="6.5" cy="6.8" r="6" fill="#1a50c0"/><path d="M2 4q2-3 5-2.5l1 2-2 2 1 2-2 2-2-2z" fill="#30a030"/><path d="M9 6l2.5-1 .5 3-2 2z" fill="#30a030"/><ellipse cx="5" cy="3.2" rx="2.2" ry="1.2" fill="#d8f0ff" opacity="0.9"/><path d="M1 10q6 3 11.5-5" stroke="#8ad0ff" fill="none" stroke-width="0.8"/></svg>
<span class="t " style="left:115px;top:428.16px;font-size:9px;line-height:9px;letter-spacing:-0.2px;color:#000;-webkit-text-stroke:0.2px #000;">gvlConfigurationProcessImage</span>
<div style="left:91px;top:447px;width:8px;height:1px;background:repeating-linear-gradient(90deg,#cdcdcd 0 1px,transparent 1px 2px);"></div>
<svg style="position:absolute;overflow:visible;left:99px;top:440px;" width="13" height="13" viewBox="0 0 13 13"><circle cx="6.5" cy="6.8" r="6" fill="#1a50c0"/><path d="M2 4q2-3 5-2.5l1 2-2 2 1 2-2 2-2-2z" fill="#30a030"/><path d="M9 6l2.5-1 .5 3-2 2z" fill="#30a030"/><ellipse cx="5" cy="3.2" rx="2.2" ry="1.2" fill="#d8f0ff" opacity="0.9"/><path d="M1 10q6 3 11.5-5" stroke="#8ad0ff" fill="none" stroke-width="0.8"/></svg>
<span class="t " style="left:115px;top:443.44px;font-size:9px;line-height:9px;letter-spacing:-0.2px;color:#000;-webkit-text-stroke:0.2px #000;">gvlOem</span>
<div style="left:91px;top:462px;width:8px;height:1px;background:repeating-linear-gradient(90deg,#cdcdcd 0 1px,transparent 1px 2px);"></div>
<svg style="position:absolute;overflow:visible;left:99px;top:456px;" width="13" height="13" viewBox="0 0 13 13"><circle cx="6.5" cy="6.8" r="6" fill="#1a50c0"/><path d="M2 4q2-3 5-2.5l1 2-2 2 1 2-2 2-2-2z" fill="#30a030"/><path d="M9 6l2.5-1 .5 3-2 2z" fill="#30a030"/><ellipse cx="5" cy="3.2" rx="2.2" ry="1.2" fill="#d8f0ff" opacity="0.9"/><path d="M1 10q6 3 11.5-5" stroke="#8ad0ff" fill="none" stroke-width="0.8"/></svg>
<span class="t " style="left:115px;top:458.72px;font-size:9px;line-height:9px;letter-spacing:-0.2px;color:#000;-webkit-text-stroke:0.2px #000;">gvlOemConfig</span>
<div style="left:91px;top:477px;width:8px;height:1px;background:repeating-linear-gradient(90deg,#cdcdcd 0 1px,transparent 1px 2px);"></div>
<svg style="position:absolute;overflow:visible;left:99px;top:471px;" width="13" height="13" viewBox="0 0 13 13"><path d="M1.5 1.5h9l2 2v9h-11z" fill="#f4f4f4" stroke="#555"/><rect x="0" y="4" width="2.5" height="5" fill="#208080"/><path d="M4 5h2v5H4zM7 5h2v5H7z" fill="#ccc"/></svg>
<span class="t " style="left:115px;top:474.00px;font-size:9px;line-height:9px;letter-spacing:-0.2px;color:#000;-webkit-text-stroke:0.2px #000;">ImagePool_OEM</span>
<div style="left:91px;top:493px;width:8px;height:1px;background:repeating-linear-gradient(90deg,#cdcdcd 0 1px,transparent 1px 2px);"></div>
<div style="left:86px;top:489px;width:7px;height:7px;background:linear-gradient(#f6f9f9,#d4d8d8);border:1px solid #bfe0e0;border-radius:1px;"></div>
<div style="left:87px;top:492px;width:5px;height:1px;background:#111;"></div>
<div style="left:89px;top:490px;width:1px;height:5px;background:#111;"></div>
<svg style="position:absolute;overflow:visible;left:99px;top:486px;" width="13" height="13" viewBox="0 0 13 13"><path d="M1.5 1.5h7l2 2v9h-9z" fill="#fff" stroke="#222"/><path d="M3 4h5M3 5.5h5M3 7h5M3 8.5h5M3 10h5" stroke="#5a60f0" stroke-width="1.1"/><path d="M10.5 4v9h-8" stroke="#222" fill="none"/></svg>
<span class="t " style="left:115px;top:489.28px;font-size:9px;line-height:9px;letter-spacing:-0.2px;color:#000;-webkit-text-stroke:0.2px #000;">SaveRetain (PRG)</span>
<div style="left:91px;top:508px;width:8px;height:1px;background:repeating-linear-gradient(90deg,#cdcdcd 0 1px,transparent 1px 2px);"></div>
<svg style="position:absolute;overflow:visible;left:99px;top:501px;" width="13" height="13" viewBox="0 0 13 13"><path d="M1.5 1.5h9l2 2v9h-11z" fill="#f4f4f4" stroke="#555"/><rect x="0" y="4" width="2.5" height="5" fill="#208080"/><path d="M4 5h2v5H4zM7 5h2v5H7z" fill="#ccc"/></svg>
<span class="t " style="left:115px;top:504.56px;font-size:9px;line-height:9px;letter-spacing:-0.2px;color:#000;-webkit-text-stroke:0.2px #000;">TL_OEM</span>
<div style="left:75px;top:523px;width:8px;height:1px;background:repeating-linear-gradient(90deg,#cdcdcd 0 1px,transparent 1px 2px);"></div>
<div style="left:70px;top:520px;width:7px;height:7px;background:linear-gradient(#f6f9f9,#d4d8d8);border:1px solid #bfe0e0;border-radius:1px;"></div>
<div style="left:71px;top:523px;width:5px;height:1px;background:#111;"></div>
<div style="left:73px;top:521px;width:1px;height:5px;background:#111;"></div>
<svg style="position:absolute;overflow:visible;left:82px;top:517px;" width="13" height="13" viewBox="0 0 13 13"><path d="M0.5 2.5h4l1 1.5h6.5v8h-12z" fill="#f7d86a" stroke="#c9a441"/><path d="M0.5 5.5h12" stroke="#fff3b0"/></svg>
<span class="t " style="left:99px;top:519.84px;font-size:9px;line-height:9px;letter-spacing:-0.2px;color:#000;-webkit-text-stroke:0.2px #000;">Bootapplication</span>
<div style="left:75px;top:538px;width:8px;height:1px;background:repeating-linear-gradient(90deg,#cdcdcd 0 1px,transparent 1px 2px);"></div>
<svg style="position:absolute;overflow:visible;left:82px;top:532px;" width="13" height="13" viewBox="0 0 13 13"><path d="M0.5 4.5l2-3h2v11h-4z" fill="#20c0c0" stroke="#111" stroke-width="0.9"/><path d="M4.5 5.5h3.5v7H4.5z" fill="#e01010" stroke="#111" stroke-width="0.9"/><path d="M8 4.5l2-1.5h2.5v9.5H8z" fill="#f0e000" stroke="#111" stroke-width="0.9"/></svg>
<span class="t " style="left:99px;top:535.12px;font-size:9px;line-height:9px;letter-spacing:-0.2px;color:#000;-webkit-text-stroke:0.2px #000;">Library Manager</span>
<div style="left:75px;top:554px;width:8px;height:1px;background:repeating-linear-gradient(90deg,#cdcdcd 0 1px,transparent 1px 2px);"></div>
<div style="left:70px;top:551px;width:7px;height:7px;background:linear-gradient(#f6f9f9,#d4d8d8);border:1px solid #bfe0e0;border-radius:1px;"></div>
<div style="left:71px;top:554px;width:5px;height:1px;background:#111;"></div>
<svg style="position:absolute;overflow:visible;left:82px;top:547px;" width="13" height="13" viewBox="0 0 13 13"><path d="M1.5 1.5h7l2 2v9h-9z" fill="#fff" stroke="#222"/><path d="M3 4h5M3 5.5h5M3 7h5M3 8.5h5M3 10h5" stroke="#5a60f0" stroke-width="1.1"/><path d="M10.5 4v9h-8" stroke="#222" fill="none"/></svg>
<span class="t " style="left:99px;top:550.40px;font-size:9px;line-height:9px;letter-spacing:-0.2px;color:#000;-webkit-text-stroke:0.2px #000;">PLC_PRG (PRG)</span>
<div style="left:91px;top:569px;width:8px;height:1px;background:repeating-linear-gradient(90deg,#cdcdcd 0 1px,transparent 1px 2px);"></div>
<svg style="position:absolute;overflow:visible;left:99px;top:562px;" width="13" height="13" viewBox="0 0 13 13"><path d="M0.5 0.5h7l2 2v9h-9z" fill="#fff" stroke="#222"/><path d="M2 3h4.5M2 4.5h4.5M2 6h4.5M2 7.5h4.5M2 9h3" stroke="#5a60f0" stroke-width="1.1"/><text x="6" y="13" font-size="8.5" font-family="Liberation Sans" font-weight="bold" fill="#10901a">A</text></svg>
<span class="t " style="left:115px;top:565.68px;font-size:9px;line-height:9px;letter-spacing:-0.2px;color:#000;-webkit-text-stroke:0.2px #000;">getText</span>
<div style="left:91px;top:584px;width:8px;height:1px;background:repeating-linear-gradient(90deg,#cdcdcd 0 1px,transparent 1px 2px);"></div>
<svg style="position:absolute;overflow:visible;left:99px;top:578px;" width="13" height="13" viewBox="0 0 13 13"><path d="M0.5 0.5h7l2 2v9h-9z" fill="#fff" stroke="#222"/><path d="M2 3h4.5M2 4.5h4.5M2 6h4.5M2 7.5h4.5M2 9h3" stroke="#5a60f0" stroke-width="1.1"/><text x="4" y="13.2" font-size="8.5" font-family="Liberation Sans" font-weight="bold" fill="#0a0a90">M</text></svg>
<span class="t " style="left:115px;top:580.96px;font-size:9px;line-height:9px;letter-spacing:-0.2px;color:#000;-webkit-text-stroke:0.2px #000;">SetConfig</span>
<div style="left:75px;top:600px;width:8px;height:1px;background:repeating-linear-gradient(90deg,#cdcdcd 0 1px,transparent 1px 2px);"></div>
<svg style="position:absolute;overflow:visible;left:82px;top:593px;" width="13" height="13" viewBox="0 0 13 13"><path d="M1.5 1.5h7l2 2v9h-9z" fill="#fff" stroke="#222"/><path d="M3 4h5M3 5.5h5M3 7h5M3 8.5h5M3 10h5" stroke="#5a60f0" stroke-width="1.1"/><path d="M10.5 4v9h-8" stroke="#222" fill="none"/></svg>
<span class="t " style="left:99px;top:596.24px;font-size:9px;line-height:9px;letter-spacing:-0.2px;color:#000;-webkit-text-stroke:0.2px #000;">PLC_PRG_Alarms (PRG)</span>
<div style="left:75px;top:615px;width:8px;height:1px;background:repeating-linear-gradient(90deg,#cdcdcd 0 1px,transparent 1px 2px);"></div>
<svg style="position:absolute;overflow:visible;left:82px;top:608px;" width="13" height="13" viewBox="0 0 13 13"><path d="M1.5 1.5h7l2 2v9h-9z" fill="#fff" stroke="#222"/><path d="M3 4h5M3 5.5h5M3 7h5M3 8.5h5M3 10h5" stroke="#5a60f0" stroke-width="1.1"/><path d="M10.5 4v9h-8" stroke="#222" fill="none"/></svg>
<span class="t " style="left:99px;top:611.52px;font-size:9px;line-height:9px;letter-spacing:-0.2px;color:#000;-webkit-text-stroke:0.2px #000;">PRG_Visu (PRG)</span>
<div style="left:75px;top:630px;width:8px;height:1px;background:repeating-linear-gradient(90deg,#cdcdcd 0 1px,transparent 1px 2px);"></div>
<div style="left:70px;top:627px;width:7px;height:7px;background:linear-gradient(#f6f9f9,#d4d8d8);border:1px solid #bfe0e0;border-radius:1px;"></div>
<div style="left:71px;top:630px;width:5px;height:1px;background:#111;"></div>
<svg style="position:absolute;overflow:visible;left:82px;top:624px;" width="13" height="13" viewBox="0 0 13 13"><rect x="0.5" y="1.5" width="4" height="10" fill="#e8e8e8" stroke="#333" stroke-width="0.8"/><rect x="4.5" y="0.5" width="4" height="10" fill="#e0e0e0" stroke="#333" stroke-width="0.8"/><rect x="8.5" y="0.5" width="4" height="10" fill="#e0e0e0" stroke="#333" stroke-width="0.8"/><circle cx="2.5" cy="4" r="1" fill="#10c010"/><circle cx="6.5" cy="3" r="0.9" fill="#d02020"/><circle cx="10.5" cy="3" r="0.9" fill="#d02020"/><circle cx="8" cy="9.5" r="2.5" fill="#e8e020" stroke="#333" stroke-width="0.8"/><circle cx="8" cy="9.5" r="4" fill="none" stroke="#e8e020" stroke-width="1.5" stroke-dasharray="1.5 1.2"/></svg>
<span class="t " style="left:99px;top:626.80px;font-size:9px;line-height:9px;letter-spacing:-0.2px;color:#000;-webkit-text-stroke:0.2px #000;">Task Configuration</span>
<div style="left:91px;top:645px;width:8px;height:1px;background:repeating-linear-gradient(90deg,#cdcdcd 0 1px,transparent 1px 2px);"></div>
<div style="left:86px;top:642px;width:7px;height:7px;background:linear-gradient(#f6f9f9,#d4d8d8);border:1px solid #bfe0e0;border-radius:1px;"></div>
<div style="left:87px;top:645px;width:5px;height:1px;background:#111;"></div>
<svg style="position:absolute;overflow:visible;left:99px;top:639px;" width="13" height="13" viewBox="0 0 13 13"><path d="M0.5 7.5l6-3 6 3-6 3z" fill="#fff" stroke="#222" stroke-width="0.9"/><path d="M0.5 9l6 3 6-3" fill="none" stroke="#333" stroke-width="0.9"/><path d="M0.5 10.5l6 3 6-3" fill="none" stroke="#555" stroke-width="0.9"/><path d="M6.5 0v4" stroke="#0a2ab0" stroke-width="1.8"/><path d="M3.8 3.2h5.4L6.5 6.5z" fill="#0a2ab0"/></svg>
<span class="t " style="left:115px;top:642.08px;font-size:9px;line-height:9px;letter-spacing:-0.2px;color:#000;-webkit-text-stroke:0.2px #000;">MainTask</span>
<div style="left:107px;top:661px;width:8px;height:1px;background:repeating-linear-gradient(90deg,#cdcdcd 0 1px,transparent 1px 2px);"></div>
<svg style="position:absolute;overflow:visible;left:115px;top:654px;" width="13" height="13" viewBox="0 0 13 13"><path d="M2.5 0.5h7l2 2v10h-9z" fill="#fff" stroke="#333"/><path d="M3 12.5h9" stroke="#888"/><rect x="4.5" y="1.5" width="4" height="4" fill="#fff" stroke="#d03040"/><rect x="4.5" y="5.5" width="4" height="4" fill="#3a3ab0" stroke="#3030a0"/><rect x="0.5" y="5.5" width="4" height="4" fill="#fff" stroke="#20a030" stroke-width="1.2"/></svg>
<span class="t " style="left:131px;top:657.36px;font-size:9px;line-height:9px;letter-spacing:-0.2px;color:#000;-webkit-text-stroke:0.2px #000;">PLC_PRG</span>
<div style="left:107px;top:676px;width:8px;height:1px;background:repeating-linear-gradient(90deg,#cdcdcd 0 1px,transparent 1px 2px);"></div>
<svg style="position:absolute;overflow:visible;left:115px;top:669px;" width="13" height="13" viewBox="0 0 13 13"><path d="M2.5 0.5h7l2 2v10h-9z" fill="#fff" stroke="#333"/><path d="M3 12.5h9" stroke="#888"/><rect x="4.5" y="1.5" width="4" height="4" fill="#fff" stroke="#d03040"/><rect x="4.5" y="5.5" width="4" height="4" fill="#3a3ab0" stroke="#3030a0"/><rect x="0.5" y="5.5" width="4" height="4" fill="#fff" stroke="#20a030" stroke-width="1.2"/></svg>
<span class="t " style="left:131px;top:672.64px;font-size:9px;line-height:9px;letter-spacing:-0.2px;color:#000;-webkit-text-stroke:0.2px #000;">PRG_Visu</span>
<div style="left:91px;top:691px;width:8px;height:1px;background:repeating-linear-gradient(90deg,#cdcdcd 0 1px,transparent 1px 2px);"></div>
<div style="left:86px;top:688px;width:7px;height:7px;background:linear-gradient(#f6f9f9,#d4d8d8);border:1px solid #bfe0e0;border-radius:1px;"></div>
<div style="left:87px;top:691px;width:5px;height:1px;background:#111;"></div>
<svg style="position:absolute;overflow:visible;left:99px;top:685px;" width="13" height="13" viewBox="0 0 13 13"><path d="M0.5 7.5l6-3 6 3-6 3z" fill="#fff" stroke="#222" stroke-width="0.9"/><path d="M0.5 9l6 3 6-3" fill="none" stroke="#333" stroke-width="0.9"/><path d="M0.5 10.5l6 3 6-3" fill="none" stroke="#555" stroke-width="0.9"/><path d="M6.5 0v4" stroke="#0a2ab0" stroke-width="1.8"/><path d="M3.8 3.2h5.4L6.5 6.5z" fill="#0a2ab0"/></svg>
<span class="t " style="left:115px;top:687.92px;font-size:9px;line-height:9px;letter-spacing:-0.2px;color:#000;-webkit-text-stroke:0.2px #000;">SaveRetainTask</span>
<div style="left:107px;top:707px;width:8px;height:1px;background:repeating-linear-gradient(90deg,#cdcdcd 0 1px,transparent 1px 2px);"></div>
<svg style="position:absolute;overflow:visible;left:115px;top:700px;" width="13" height="13" viewBox="0 0 13 13"><path d="M2.5 0.5h7l2 2v10h-9z" fill="#fff" stroke="#333"/><path d="M3 12.5h9" stroke="#888"/><rect x="4.5" y="1.5" width="4" height="4" fill="#fff" stroke="#d03040"/><rect x="4.5" y="5.5" width="4" height="4" fill="#3a3ab0" stroke="#3030a0"/><rect x="0.5" y="5.5" width="4" height="4" fill="#fff" stroke="#20a030" stroke-width="1.2"/></svg>
<span class="t " style="left:131px;top:703.20px;font-size:9px;line-height:9px;letter-spacing:-0.2px;color:#000;-webkit-text-stroke:0.2px #000;">SaveRetain</span>
<div style="left:91px;top:722px;width:8px;height:1px;background:repeating-linear-gradient(90deg,#cdcdcd 0 1px,transparent 1px 2px);"></div>
<div style="left:86px;top:719px;width:7px;height:7px;background:linear-gradient(#f6f9f9,#d4d8d8);border:1px solid #bfe0e0;border-radius:1px;"></div>
<div style="left:87px;top:722px;width:5px;height:1px;background:#111;"></div>
<svg style="position:absolute;overflow:visible;left:99px;top:715px;" width="13" height="13" viewBox="0 0 13 13"><path d="M0.5 7.5l6-3 6 3-6 3z" fill="#fff" stroke="#222" stroke-width="0.9"/><path d="M0.5 9l6 3 6-3" fill="none" stroke="#333" stroke-width="0.9"/><path d="M0.5 10.5l6 3 6-3" fill="none" stroke="#555" stroke-width="0.9"/><path d="M6.5 0v4" stroke="#0a2ab0" stroke-width="1.8"/><path d="M3.8 3.2h5.4L6.5 6.5z" fill="#0a2ab0"/></svg>
<span class="t " style="left:115px;top:718.48px;font-size:9px;line-height:9px;letter-spacing:-0.2px;color:#000;-webkit-text-stroke:0.2px #000;">VISU_TASK</span>
<div style="left:107px;top:737px;width:8px;height:1px;background:repeating-linear-gradient(90deg,#cdcdcd 0 1px,transparent 1px 2px);"></div>
<svg style="position:absolute;overflow:visible;left:115px;top:731px;" width="13" height="13" viewBox="0 0 13 13"><path d="M2.5 0.5h7l2 2v10h-9z" fill="#fff" stroke="#333"/><path d="M3 12.5h9" stroke="#888"/><rect x="4.5" y="1.5" width="4" height="4" fill="#fff" stroke="#d03040"/><rect x="4.5" y="5.5" width="4" height="4" fill="#3a3ab0" stroke="#3030a0"/><rect x="0.5" y="5.5" width="4" height="4" fill="#fff" stroke="#20a030" stroke-width="1.2"/></svg>
<span class="t " style="left:131px;top:733.76px;font-size:9px;line-height:9px;letter-spacing:-0.2px;color:#000;-webkit-text-stroke:0.2px #000;">VisuElems.Visu_Prg</span>
<div style="left:107px;top:752px;width:8px;height:1px;background:repeating-linear-gradient(90deg,#cdcdcd 0 1px,transparent 1px 2px);"></div>
<svg style="position:absolute;overflow:visible;left:115px;top:746px;" width="13" height="13" viewBox="0 0 13 13"><path d="M2.5 0.5h7l2 2v10h-9z" fill="#fff" stroke="#333"/><path d="M3 12.5h9" stroke="#888"/><rect x="4.5" y="1.5" width="4" height="4" fill="#fff" stroke="#d03040"/><rect x="4.5" y="5.5" width="4" height="4" fill="#3a3ab0" stroke="#3030a0"/><rect x="0.5" y="5.5" width="4" height="4" fill="#fff" stroke="#20a030" stroke-width="1.2"/></svg>
<span class="t " style="left:131px;top:749.04px;font-size:9px;line-height:9px;letter-spacing:-0.2px;color:#000;-webkit-text-stroke:0.2px #000;">PRG_Visualization</span>
<div style="left:107px;top:768px;width:8px;height:1px;background:repeating-linear-gradient(90deg,#cdcdcd 0 1px,transparent 1px 2px);"></div>
<svg style="position:absolute;overflow:visible;left:115px;top:761px;" width="13" height="13" viewBox="0 0 13 13"><path d="M2.5 0.5h7l2 2v10h-9z" fill="#fff" stroke="#333"/><path d="M3 12.5h9" stroke="#888"/><rect x="4.5" y="1.5" width="4" height="4" fill="#fff" stroke="#d03040"/><rect x="4.5" y="5.5" width="4" height="4" fill="#3a3ab0" stroke="#3030a0"/><rect x="0.5" y="5.5" width="4" height="4" fill="#fff" stroke="#20a030" stroke-width="1.2"/></svg>
<span class="t " style="left:131px;top:764.32px;font-size:9px;line-height:9px;letter-spacing:-0.2px;color:#000;-webkit-text-stroke:0.2px #000;">VisuClientManager</span>
<div style="left:75px;top:783px;width:8px;height:1px;background:repeating-linear-gradient(90deg,#cdcdcd 0 1px,transparent 1px 2px);"></div>
<div style="left:70px;top:780px;width:7px;height:7px;background:linear-gradient(#f6f9f9,#d4d8d8);border:1px solid #bfe0e0;border-radius:1px;"></div>
<div style="left:71px;top:783px;width:5px;height:1px;background:#111;"></div>
<div style="left:73px;top:781px;width:1px;height:5px;background:#111;"></div>
<svg style="position:absolute;overflow:visible;left:82px;top:776px;" width="13" height="13" viewBox="0 0 13 13"><path d="M2.5 1.5h8l2 2v9h-10z" fill="#fff" stroke="#222"/><circle cx="7" cy="5" r="2" fill="#d02030"/><path d="M3.5 12v-4h7v4z" fill="#d02030"/><rect x="0" y="6" width="3" height="3" fill="#20a030"/></svg>
<span class="t " style="left:99px;top:779.60px;font-size:9px;line-height:9px;letter-spacing:-0.2px;color:#000;-webkit-text-stroke:0.2px #000;">Visualization Manager</span>
<div style="left:42px;top:798px;width:8px;height:1px;background:repeating-linear-gradient(90deg,#cdcdcd 0 1px,transparent 1px 2px);"></div>
<svg style="position:absolute;overflow:visible;left:50px;top:792px;" width="13" height="13" viewBox="0 0 13 13"><rect x="0" y="0" width="13" height="13" fill="#3a72c8"/><text x="6.5" y="6" text-anchor="middle" font-size="5" font-family="Liberation Sans" font-weight="bold" fill="#fff">PLC</text><rect x="2" y="8" width="9" height="3" fill="#cfe0f8"/></svg>
<span class="t " style="left:67px;top:794.88px;font-size:9px;line-height:9px;letter-spacing:-0.2px;color:#000;-webkit-text-stroke:0.2px #000;">PLC_Manager (70.0000)</span>
<div style="left:42px;top:813px;width:8px;height:1px;background:repeating-linear-gradient(90deg,#cdcdcd 0 1px,transparent 1px 2px);"></div>
<svg style="position:absolute;overflow:visible;left:50px;top:807px;" width="13" height="13" viewBox="0 0 13 13"><rect x="0" y="0" width="13" height="13" rx="3" fill="#0a40b8"/><path d="M1.5 7q5-5 10 0q-5 4-10 0z" fill="#fff"/><circle cx="6.5" cy="6.8" r="1.8" fill="#0a40b8"/></svg>
<span class="t " style="left:67px;top:810.16px;font-size:9px;line-height:9px;letter-spacing:-0.2px;color:#000;-webkit-text-stroke:0.2px #000;">Observer (705003)</span>
<div style="left:42px;top:829px;width:8px;height:1px;background:repeating-linear-gradient(90deg,#cdcdcd 0 1px,transparent 1px 2px);"></div>
<div style="left:38px;top:826px;width:7px;height:7px;background:linear-gradient(#f6f9f9,#d4d8d8);border:1px solid #bfe0e0;border-radius:1px;"></div>
<div style="left:39px;top:829px;width:5px;height:1px;background:#111;"></div>
<div style="left:41px;top:827px;width:1px;height:5px;background:#111;"></div>
<svg style="position:absolute;overflow:visible;left:50px;top:822px;" width="13" height="13" viewBox="0 0 13 13"><rect x="0" y="0" width="13" height="13" rx="2" fill="#1a3ab0"/><rect x="2.5" y="2" width="3" height="5" fill="#fff"/><rect x="7.5" y="2" width="3" height="5" fill="#fff"/><rect x="1" y="9" width="11" height="2" fill="#bcd"/></svg>
<span class="t " style="left:67px;top:825.44px;font-size:9px;line-height:9px;letter-spacing:-0.2px;color:#000;-webkit-text-stroke:0.2px #000;">Systembus (705000)</span>
<div style="left:2px;top:1056px;width:254px;height:12px;background:#f0f0f0;"></div>
<div style="left:15px;top:1056px;width:224px;height:12px;background:#cdcdcd;"></div>
<svg style="position:absolute;overflow:visible;left:5px;top:1058px;" width="6" height="8" viewBox="0 0 6 8"><path d="M5 0L1 4l4 4" stroke="#333" fill="none" stroke-width="1.4"/></svg>
<svg style="position:absolute;overflow:visible;left:246px;top:1058px;" width="6" height="8" viewBox="0 0 6 8"><path d="M1 0l4 4-4 4" stroke="#333" fill="none" stroke-width="1.4"/></svg>
<div style="left:2px;top:1069px;width:255px;height:1px;background:#a0a0a0;"></div>
<div style="left:256px;top:103px;width:1px;height:967px;background:#9a9a9a;"></div>
<div style="left:2px;top:1069px;width:52px;height:19px;background:#fff;border:1px solid #b8b8b8;border-top:none;border-bottom-right-radius:3px;"></div>
<svg style="position:absolute;overflow:visible;left:3px;top:1073px;" width="14" height="13" viewBox="0 0 14 13"><ellipse cx="7" cy="3" rx="6" ry="2.5" fill="#bbb" stroke="#555" stroke-width="0.6"/><rect x="1" y="3" width="12" height="3" fill="#999"/><ellipse cx="7" cy="10" rx="6.5" ry="2" fill="#446" /><circle cx="6" cy="9.5" r="2" fill="#f0c020"/></svg>
<span class="t " style="left:19px;top:1075.38px;font-size:9px;line-height:9px;letter-spacing:-0.15px;color:#111;">Devices</span>
<svg style="position:absolute;overflow:visible;left:57px;top:1072px;" width="12" height="14" viewBox="0 0 12 14"><path d="M1.5 2.5h6v10h-6z" fill="#eef" stroke="#555"/><path d="M3.5 1.5h5l2 2v10h-7z" fill="#f4f8ff" stroke="#444"/></svg>
<span class="t " style="left:71px;top:1075.38px;font-size:9px;line-height:9px;letter-spacing:-0.15px;color:#777;">POUs</span>
<div style="left:3px;top:1090px;width:250px;height:17px;background:#f2f2f2;border:1px solid #a8a8a8;border-bottom:none;border-radius:3px 3px 0 0;"></div>
<svg style="position:absolute;overflow:visible;left:6px;top:1093px;" width="10" height="11" viewBox="0 0 10 11"><rect x="0.5" y="0.5" width="9" height="10" fill="#eee" stroke="#333"/><rect x="0" y="0" width="10" height="2" fill="#1a2a90"/><path d="M2 5h6" stroke="#888" stroke-width="2"/></svg>
<span class="t " style="left:23px;top:1094.13px;font-size:9.3px;line-height:9.3px;letter-spacing:0px;color:#777;">Messages - Total 0 error(s), 0 warning(s), 9 message(s)</span>
<div style="left:260px;top:84px;width:1050px;height:1005px;background:#f0f0f0;border:1px solid #a0a0a0;"></div>
<div style="left:261px;top:85px;width:1048px;height:16px;background:#f0f0f0;"></div>
<svg style="position:absolute;overflow:visible;left:262px;top:86px;" width="215" height="16" viewBox="0 0 215 16"><path d="M1 15 L15 1.5 L352 1.5" fill="none"/><path d="M1.5 15 L15 1.5 H91 L84 14.5 Z" fill="#f4f4f4" stroke="#b0b0b0"/><path d="M92 15 L92 1.5 H207 Q209.5 1.5 209.5 4 V15" fill="#fafafa" stroke="#a8a8a8"/></svg>
<svg style="position:absolute;overflow:visible;left:276px;top:87px;" width="13" height="13" viewBox="0 0 13 13"><path d="M1.5 1.5h7l2 2v9h-9z" fill="#fff" stroke="#222"/><path d="M3 4h5M3 5.5h5M3 7h5M3 8.5h5M3 10h5" stroke="#5a60f0" stroke-width="1.1"/><path d="M10.5 4v9h-8" stroke="#222" fill="none"/></svg>
<span class="t " style="left:296px;top:89.38px;font-size:9px;line-height:9px;letter-spacing:-0.3px;color:#222;">PLC_PRG</span>
<svg style="position:absolute;overflow:visible;left:358px;top:87px;" width="13" height="13" viewBox="0 0 13 13"><path d="M2.5 0.5h7l2 2v10h-9z" fill="#fff" stroke="#333"/><path d="M3 12.5h9" stroke="#888"/><rect x="4" y="1.5" width="4" height="4" fill="#f0d000" stroke="#e02020"/><rect x="4" y="5.5" width="4" height="4" fill="#c02080" stroke="#e02020"/><rect x="0.5" y="5.5" width="4" height="4" fill="#e8e800" stroke="#20b020"/></svg>
<span class="t " style="left:376px;top:88.87px;font-size:9.6px;line-height:9.6px;letter-spacing:-0.05px;font-weight:bold;color:#000;">ProcessImage03</span>
<svg style="position:absolute;overflow:visible;left:459px;top:90px;" width="8" height="8" viewBox="0 0 8 8"><path d="M1 1l6 6M7 1L1 7" stroke="#000" stroke-width="1.8"/></svg>
<svg style="position:absolute;overflow:visible;left:1299px;top:93px;" width="8" height="5" viewBox="0 0 8 5"><path d="M0 0h7l-3.5 4z" fill="#000"/></svg>
<div style="left:261px;top:100px;width:1048px;height:1px;background:#d0d0d0;"></div>
<div style="left:261px;top:101px;width:1048px;height:1px;background:#b8b8b8;"></div>
<div style="left:261px;top:102px;width:1048px;height:1px;background:#f6f6f6;"></div>
<div style="left:261px;top:103px;width:1048px;height:1px;background:#bcbcbc;"></div>
<div style="left:261px;top:104px;width:1048px;height:3px;background:#f4f4f4;"></div>
<div style="left:261px;top:107px;width:1048px;height:1px;background:#b0b0b0;"></div>
<svg style="position:absolute;overflow:visible;left:775px;top:103px;" width="22" height="5" viewBox="0 0 22 5"><path d="M1 4.5l3-3 3 3" fill="none" stroke="#aaa"/><path d="M13 0.5h8l-4 4z" fill="#666"/></svg>
<div style="left:261px;top:108px;width:1035px;height:966px;background:#808080;"></div>
<div style="left:261px;top:108px;width:1030px;height:547px;background:#f0f1f1;"></div>
<div style="left:1296px;top:108px;width:13px;height:966px;background:#f0f0f0;"></div>
<div style="left:1297px;top:122px;width:11px;height:469px;background:#cdcdcd;"></div>
<svg style="position:absolute;overflow:visible;left:1299px;top:112px;" width="8" height="6" viewBox="0 0 8 6"><path d="M0.8 5L4 1.8l3.2 3.2" stroke="#333" fill="none" stroke-width="1.4"/></svg>
<svg style="position:absolute;overflow:visible;left:1298px;top:1064px;" width="9" height="6" viewBox="0 0 9 6"><path d="M0.5 1L4.5 5l4-4" stroke="#333" fill="none" stroke-width="1.4"/></svg>
<div style="left:261px;top:1074px;width:1035px;height:14px;background:#f0f0f0;"></div>
<div style="left:274px;top:1075px;width:405px;height:12px;background:#cdcdcd;"></div>
<svg style="position:absolute;overflow:visible;left:264px;top:1077px;" width="6" height="8" viewBox="0 0 6 8"><path d="M5 0L1 4l4 4" stroke="#333" fill="none" stroke-width="1.4"/></svg>
<svg style="position:absolute;overflow:visible;left:1287px;top:1077px;" width="6" height="8" viewBox="0 0 6 8"><path d="M1 0l4 4-4 4" stroke="#333" fill="none" stroke-width="1.4"/></svg>
<div style="left:1244px;top:1059px;width:35px;height:15px;background:#f4f4f4;"></div>
<span class="t " style="left:1249px;top:1063.38px;font-size:9px;line-height:9px;letter-spacing:-0.4px;color:#222;">100 %</span>
<div style="left:1279px;top:1059px;width:16px;height:14px;background:#f4f4f4;border-left:1px solid #ddd;"></div>
<svg style="position:absolute;overflow:visible;left:1281px;top:1059px;" width="14" height="14" viewBox="0 0 14 14"><rect x="1" y="5" width="6" height="7" fill="none" stroke="#333"/><circle cx="7" cy="5" r="3.5" fill="#8ee" stroke="#111" stroke-width="1.2"/><path d="M9.5 7.5L13 11" stroke="#111" stroke-width="1.6"/></svg>
<span class="t " style="left:755px;top:129.87px;font-size:28.5px;line-height:28.5px;letter-spacing:-0.3px;font-weight:bold;color:#000;">%s</span>
<div style="left:373px;top:284px;width:122px;height:25px;background:#fff;border:1px solid #c8c8c8;"></div>
<span class="t " style="left:422px;top:287.18px;font-size:15.5px;line-height:15.5px;letter-spacing:0px;color:#2a6ab8;">%s</span>
<svg style="position:absolute;overflow:visible;left:429.5px;top:292px;" width="9" height="9" viewBox="0 0 9 9"><circle cx="4.5" cy="4.5" r="3.8" fill="#222"/><path d="M4.5 2v5M2 4.5h5" stroke="#ddd" stroke-width="1.1"/></svg>
<div style="left:370px;top:281px;width:6px;height:6px;background:#2a2aff;border:1px solid #1a1ae0;border-radius:1px;"></div>
<div style="left:370px;top:294px;width:6px;height:6px;background:#2a2aff;border:1px solid #1a1ae0;border-radius:1px;"></div>
<div style="left:370px;top:306px;width:6px;height:6px;background:#2a2aff;border:1px solid #1a1ae0;border-radius:1px;"></div>
<div style="left:431px;top:281px;width:6px;height:6px;background:#2a2aff;border:1px solid #1a1ae0;border-radius:1px;"></div>
<div style="left:431px;top:306px;width:6px;height:6px;background:#2a2aff;border:1px solid #1a1ae0;border-radius:1px;"></div>
<div style="left:491px;top:281px;width:6px;height:6px;background:#2a2aff;border:1px solid #1a1ae0;border-radius:1px;"></div>
<div style="left:491px;top:294px;width:6px;height:6px;background:#2a2aff;border:1px solid #1a1ae0;border-radius:1px;"></div>
<div style="left:491px;top:306px;width:6px;height:6px;background:#2a2aff;border:1px solid #1a1ae0;border-radius:1px;"></div>
<div style="left:656px;top:273px;width:559px;height:354px;background:#f0f0f0;border:2px solid #000;"></div>
<div style="left:658px;top:275px;width:555px;height:34px;background:#fff;"></div>
<span class="t " style="left:667px;top:286.00px;font-size:13px;line-height:13px;letter-spacing:0.05px;color:#000;">Assign parameters &lt;InputInt&gt;</span>
<div style="left:1190px;top:283px;width:23px;height:21px;background:#c9474a;"></div>
<svg style="position:absolute;overflow:visible;left:1197px;top:290px;" width="9" height="9" viewBox="0 0 9 9"><path d="M1.5 1.5l6 6M7.5 1.5l-6 6" stroke="#fff" stroke-width="1.6"/></svg>
<span class="t " style="left:673.5px;top:318.58px;font-size:12.9px;line-height:12.9px;letter-spacing:-0.02px;color:#111;">Assign the parameters for the referenced visualization &lt;InputInt&gt;.</span>
<div style="left:671px;top:354px;width:529px;height:217px;background:#fff;border:1px solid #a3a8ae;border-radius:1px;"></div>
<span class="t " style="left:680.5px;top:362.93px;font-size:12.6px;line-height:12.6px;letter-spacing:0px;color:#111;">Parameter</span>
<span class="t " style="left:843px;top:363.63px;font-size:12.6px;line-height:12.6px;letter-spacing:0px;color:#111;">Type</span>
<span class="t " style="left:923px;top:362.93px;font-size:12.6px;line-height:12.6px;letter-spacing:0px;color:#111;">Value</span>
<div style="left:837px;top:358px;width:1px;height:25px;background:#e8e8e8;"></div>
<div style="left:916px;top:358px;width:1px;height:25px;background:#e8e8e8;"></div>
<div style="left:1093px;top:358px;width:1px;height:25px;background:#e8e8e8;"></div>
<div style="left:696px;top:383.0px;width:141px;height:21px;background:#efefef;"></div>
<div style="left:838px;top:383.0px;width:78px;height:21px;background:#efefef;"></div>
<div style="left:674px;top:403.0px;width:420px;height:1.2px;background:#dedede;"></div>
<div style="left:837px;top:383.0px;width:1.2px;height:21px;background:#dedede;"></div>
<div style="left:916px;top:383.0px;width:1.2px;height:21px;background:#dedede;"></div>
<div style="left:1093px;top:383.0px;width:1.2px;height:21px;background:#dedede;"></div>
<svg style="position:absolute;overflow:visible;left:698px;top:385.0px;" width="16" height="16" viewBox="0 0 16 16"><path d="M1.5 1.5l5 5" stroke="#8a1020" stroke-width="1.6" fill="none"/><path d="M3 7.5h4.5V3z" fill="#8a1020"/><path d="M5 0.5l4 4M3.5 0.5h6v6" stroke="#8a1020" stroke-width="1.4" fill="none"/><path d="M6 8l4-3 4 3-4 3z" fill="#3a78e0" stroke="#222" stroke-width="0.8"/><path d="M6 8v4l4 3 4-3V8l-4 3z" fill="#777" stroke="#222" stroke-width="0.8"/></svg>
<span class="t " style="left:722.5px;top:388.67px;font-size:12.2px;line-height:12.2px;letter-spacing:-0.25px;color:#111;">iValue</span>
<span class="t " style="left:842.5px;top:388.17px;font-size:12.2px;line-height:12.2px;letter-spacing:-0.35px;color:#111;">INT</span>
<span class="t " style="left:921.5px;top:384.67px;font-size:12.2px;line-height:12.2px;letter-spacing:-0.3px;color:#111;">PLC_PRG.iIntegerValue</span>
<div style="left:686px;top:393.0px;width:10px;height:1px;border-top:1px dotted #aaa;"></div>
<div style="left:674px;top:424.05px;width:420px;height:1.2px;background:#dedede;"></div>
<div style="left:837px;top:404.05px;width:1.2px;height:21px;background:#dedede;"></div>
<div style="left:916px;top:404.05px;width:1.2px;height:21px;background:#dedede;"></div>
<div style="left:1093px;top:404.05px;width:1.2px;height:21px;background:#dedede;"></div>
<svg style="position:absolute;overflow:visible;left:698px;top:407.05px;" width="16" height="16" viewBox="0 0 16 16"><path d="M1.5 1.5l5 5" stroke="#8a1020" stroke-width="1.6" fill="none"/><path d="M3 7.5h4.5V3z" fill="#8a1020"/><path d="M6 8l4-3 4 3-4 3z" fill="#3a78e0" stroke="#222" stroke-width="0.8"/><path d="M6 8v4l4 3 4-3V8l-4 3z" fill="#777" stroke="#222" stroke-width="0.8"/></svg>
<span class="t " style="left:722.5px;top:408.22px;font-size:12.2px;line-height:12.2px;letter-spacing:-0.25px;color:#111;">iMax</span>
<span class="t " style="left:842.5px;top:408.22px;font-size:12.2px;line-height:12.2px;letter-spacing:-0.35px;color:#111;">INT</span>
<span class="t " style="left:922.5px;top:408.22px;font-size:12.2px;line-height:12.2px;letter-spacing:-0.3px;color:#111;">100</span>
<div style="left:686px;top:414.05px;width:10px;height:1px;border-top:1px dotted #aaa;"></div>
<div style="left:674px;top:445.1px;width:420px;height:1.2px;background:#dedede;"></div>
<div style="left:837px;top:425.1px;width:1.2px;height:21px;background:#dedede;"></div>
<div style="left:916px;top:425.1px;width:1.2px;height:21px;background:#dedede;"></div>
<div style="left:1093px;top:425.1px;width:1.2px;height:21px;background:#dedede;"></div>
<svg style="position:absolute;overflow:visible;left:698px;top:428.1px;" width="16" height="16" viewBox="0 0 16 16"><path d="M1.5 1.5l5 5" stroke="#8a1020" stroke-width="1.6" fill="none"/><path d="M3 7.5h4.5V3z" fill="#8a1020"/><path d="M6 8l4-3 4 3-4 3z" fill="#3a78e0" stroke="#222" stroke-width="0.8"/><path d="M6 8v4l4 3 4-3V8l-4 3z" fill="#777" stroke="#222" stroke-width="0.8"/></svg>
<span class="t " style="left:722.5px;top:429.27px;font-size:12.2px;line-height:12.2px;letter-spacing:-0.25px;color:#111;">iMin</span>
<span class="t " style="left:842.5px;top:429.27px;font-size:12.2px;line-height:12.2px;letter-spacing:-0.35px;color:#111;">INT</span>
<span class="t " style="left:922.5px;top:429.27px;font-size:12.2px;line-height:12.2px;letter-spacing:-0.3px;color:#111;">0</span>
<div style="left:686px;top:435.1px;width:10px;height:1px;border-top:1px dotted #aaa;"></div>
<div style="left:674px;top:466.15px;width:420px;height:1.2px;background:#dedede;"></div>
<div style="left:837px;top:446.15px;width:1.2px;height:21px;background:#dedede;"></div>
<div style="left:916px;top:446.15px;width:1.2px;height:21px;background:#dedede;"></div>
<div style="left:1093px;top:446.15px;width:1.2px;height:21px;background:#dedede;"></div>
<svg style="position:absolute;overflow:visible;left:698px;top:449.15px;" width="16" height="16" viewBox="0 0 16 16"><path d="M1.5 1.5l5 5" stroke="#8a1020" stroke-width="1.6" fill="none"/><path d="M3 7.5h4.5V3z" fill="#8a1020"/><path d="M6 8l4-3 4 3-4 3z" fill="#3a78e0" stroke="#222" stroke-width="0.8"/><path d="M6 8v4l4 3 4-3V8l-4 3z" fill="#777" stroke="#222" stroke-width="0.8"/></svg>
<span class="t " style="left:722.5px;top:450.32px;font-size:12.2px;line-height:12.2px;letter-spacing:-0.25px;color:#111;">wsTitle</span>
<span class="t " style="left:842.5px;top:450.32px;font-size:12.2px;line-height:12.2px;letter-spacing:-0.35px;color:#111;">WSTRING</span>
<span class="t " style="left:922.5px;top:450.32px;font-size:12.2px;line-height:12.2px;letter-spacing:-0.3px;color:#111;">"Input Value"</span>
<div style="left:686px;top:456.15px;width:10px;height:1px;border-top:1px dotted #aaa;"></div>
<div style="left:674px;top:487.2px;width:420px;height:1.2px;background:#dedede;"></div>
<div style="left:837px;top:467.2px;width:1.2px;height:21px;background:#dedede;"></div>
<div style="left:916px;top:467.2px;width:1.2px;height:21px;background:#dedede;"></div>
<div style="left:1093px;top:467.2px;width:1.2px;height:21px;background:#dedede;"></div>
<svg style="position:absolute;overflow:visible;left:698px;top:470.2px;" width="16" height="16" viewBox="0 0 16 16"><path d="M1.5 1.5l5 5" stroke="#8a1020" stroke-width="1.6" fill="none"/><path d="M3 7.5h4.5V3z" fill="#8a1020"/><path d="M6 8l4-3 4 3-4 3z" fill="#3a78e0" stroke="#222" stroke-width="0.8"/><path d="M6 8v4l4 3 4-3V8l-4 3z" fill="#777" stroke="#222" stroke-width="0.8"/></svg>
<span class="t " style="left:722.5px;top:471.37px;font-size:12.2px;line-height:12.2px;letter-spacing:-0.25px;color:#111;">wsUnit</span>
<span class="t " style="left:842.5px;top:471.37px;font-size:12.2px;line-height:12.2px;letter-spacing:-0.35px;color:#111;">WSTRING</span>
<span class="t " style="left:922.5px;top:471.37px;font-size:12.2px;line-height:12.2px;letter-spacing:-0.3px;color:#111;">"Minute"</span>
<div style="left:686px;top:477.2px;width:10px;height:1px;border-top:1px dotted #aaa;"></div>
<div style="left:674px;top:508.25px;width:420px;height:1.2px;background:#dedede;"></div>
<div style="left:837px;top:488.25px;width:1.2px;height:21px;background:#dedede;"></div>
<div style="left:916px;top:488.25px;width:1.2px;height:21px;background:#dedede;"></div>
<div style="left:1093px;top:488.25px;width:1.2px;height:21px;background:#dedede;"></div>
<svg style="position:absolute;overflow:visible;left:698px;top:491.25px;" width="16" height="16" viewBox="0 0 16 16"><path d="M1.5 1.5l5 5" stroke="#8a1020" stroke-width="1.6" fill="none"/><path d="M3 7.5h4.5V3z" fill="#8a1020"/><path d="M6 8l4-3 4 3-4 3z" fill="#3a78e0" stroke="#222" stroke-width="0.8"/><path d="M6 8v4l4 3 4-3V8l-4 3z" fill="#777" stroke="#222" stroke-width="0.8"/></svg>
<span class="t " style="left:722.5px;top:492.42px;font-size:12.2px;line-height:12.2px;letter-spacing:-0.25px;color:#111;">dwTextAlignment</span>
<span class="t " style="left:842.5px;top:492.42px;font-size:12.2px;line-height:12.2px;letter-spacing:-0.35px;color:#111;">DWORD</span>
<span class="t " style="left:922.5px;top:492.42px;font-size:12.2px;line-height:12.2px;letter-spacing:-0.3px;color:#111;">5</span>
<div style="left:686px;top:498.25px;width:10px;height:1px;border-top:1px dotted #aaa;"></div>
<div style="left:685px;top:392px;width:1px;height:103px;border-left:1px dotted #aaa;"></div>
<div style="left:1068px;top:384px;width:24px;height:18px;background:#f2f2f2;border:1px solid #a8a8a8;"></div>
<span class="t " style="left:1074px;top:387.84px;font-size:12px;line-height:12px;letter-spacing:0px;font-weight:bold;color:#111;">...</span>
<div style="left:669px;top:356px;width:430px;height:158px;border:3px solid #f00c0c;"></div>
<div style="left:1028px;top:587px;width:81px;height:24px;background:#e1e1e1;border:2px solid #0078d7;"></div>
<span class="t" style="left:968.50px;width:200px;text-align:center;top:593.42px;font-size:12.5px;line-height:12.5px;letter-spacing:0px;color:#000;">OK</span>
<div style="left:1118px;top:587px;width:81px;height:24px;background:#e1e1e1;border:1px solid #adadad;"></div>
<span class="t" style="left:1058.50px;width:200px;text-align:center;top:593.42px;font-size:12.5px;line-height:12.5px;letter-spacing:0px;color:#000;">Cancel</span>
<div style="left:1208px;top:614px;width:1.5px;height:1.5px;background:#aaa;"></div>
<div style="left:1204px;top:618px;width:1.5px;height:1.5px;background:#aaa;"></div>
<div style="left:1208px;top:618px;width:1.5px;height:1.5px;background:#aaa;"></div>
<div style="left:1200px;top:622px;width:1.5px;height:1.5px;background:#aaa;"></div>
<div style="left:1204px;top:622px;width:1.5px;height:1.5px;background:#aaa;"></div>
<div style="left:1208px;top:622px;width:1.5px;height:1.5px;background:#aaa;"></div>
<div style="left:1313px;top:84px;width:364px;height:1005px;background:#f0f0f0;"></div>
<div style="left:1313px;top:85px;width:364px;height:18px;background:#9ab4d2;"></div>
<span class="t " style="left:1318px;top:90.21px;font-size:9.2px;line-height:9.2px;letter-spacing:-0.2px;color:#111;">Visualization Toolbox</span>
<svg style="position:absolute;overflow:visible;left:1631px;top:93px;" width="8" height="5" viewBox="0 0 8 5"><path d="M0 0h7l-3.5 4z" fill="#000"/></svg>
<svg style="position:absolute;overflow:visible;left:1647.5px;top:90px;" width="7" height="9" viewBox="0 0 7 9"><path d="M2 0.5h3v4h1.5v1h-5v-1H2z" stroke="#000" stroke-width="1" fill="#fff"/><path d="M3.5 5.5v3" stroke="#000"/></svg>
<svg style="position:absolute;overflow:visible;left:1663.5px;top:90px;" width="8" height="8" viewBox="0 0 8 8"><path d="M1 1l6 6M7 1L1 7" stroke="#000" stroke-width="1.8"/></svg>
<div style="left:1313px;top:103px;width:364px;height:20px;background:linear-gradient(#fafafa,#ececec);"></div>
<svg style="position:absolute;overflow:visible;left:1319px;top:105px;" width="14" height="15" viewBox="0 0 14 15"><path d="M1.5 1.5h8l3 3v9h-11z" fill="#fff" stroke="#222"/><path d="M3 5h7M3 8h7M3 11h7M5 3v10M8 3v10" stroke="#a8a" stroke-width="0.8"/><rect x="5" y="7" width="3" height="2" fill="#0d0"/></svg>
<div style="left:1336px;top:107px;width:1px;height:12px;background:#c8c8c8;"></div>
<svg style="position:absolute;overflow:visible;left:1342px;top:105px;" width="14" height="15" viewBox="0 0 14 15"><path d="M1.5 1.5h8l3 3v9h-11z" fill="#fff" stroke="#222"/><path d="M3 5h7M3 8h7M3 11h7M5 3v10M8 3v10" stroke="#a8a" stroke-width="0.8"/><rect x="3" y="4" width="3" height="2" fill="#0d0"/><rect x="6" y="7" width="5" height="2" fill="#0d0"/></svg>
<div style="left:1361px;top:107px;width:1px;height:12px;background:#c8c8c8;"></div>
<svg style="position:absolute;overflow:visible;left:1366px;top:105px;" width="14" height="14" viewBox="0 0 14 14"><rect x="0.5" y="0.5" width="13" height="12" fill="#fff" stroke="#1a2a90"/><rect x="0" y="0" width="14" height="2" fill="#1a2a90"/><path d="M2 13l6-6" stroke="#222" stroke-width="2"/><path d="M6 4l5 2-2 3z" fill="#c8a000" stroke="#222" stroke-width="0.6"/></svg>
<div style="left:1314px;top:124.00px;width:44.40px;height:16.3px;background:linear-gradient(#a4a4a4,#808080 50%,#5e5e5e);border:1px solid #585858;border-radius:4px;"></div>
<span class="t" style="left:1304.00px;width:65px;text-align:center;top:127.84px;font-size:10px;line-height:10px;letter-spacing:0px;color:#ececec;">Basic</span>
<div style="left:1361px;top:124.00px;width:99.40px;height:16.3px;background:linear-gradient(#a4a4a4,#808080 50%,#5e5e5e);border:1px solid #585858;border-radius:4px;"></div>
<span class="t" style="left:1351.00px;width:120px;text-align:center;top:127.84px;font-size:10px;line-height:10px;letter-spacing:0px;color:#ececec;">Common Controls</span>
<div style="left:1463px;top:124.00px;width:87.40px;height:16.3px;background:linear-gradient(#a4a4a4,#808080 50%,#5e5e5e);border:1px solid #585858;border-radius:4px;"></div>
<span class="t" style="left:1453.00px;width:108px;text-align:center;top:127.84px;font-size:10px;line-height:10px;letter-spacing:0px;color:#ececec;">Alarm Manager</span>
<div style="left:1553px;top:124.00px;width:123.40px;height:16.3px;background:linear-gradient(#a4a4a4,#808080 50%,#5e5e5e);border:1px solid #585858;border-radius:4px;"></div>
<span class="t" style="left:1543.00px;width:144px;text-align:center;top:127.84px;font-size:10px;line-height:10px;letter-spacing:0px;color:#ececec;">Measurement Controls</span>
<div style="left:1314px;top:141.67px;width:140.40px;height:16.3px;background:linear-gradient(#a4a4a4,#808080 50%,#5e5e5e);border:1px solid #585858;border-radius:4px;"></div>
<span class="t" style="left:1304.00px;width:161px;text-align:center;top:145.51px;font-size:10px;line-height:10px;letter-spacing:0px;color:#ececec;">Lamps/Switches/Bitmaps</span>
<div style="left:1456px;top:141.67px;width:100.90px;height:16.3px;background:linear-gradient(#a4a4a4,#808080 50%,#5e5e5e);border:1px solid #585858;border-radius:4px;"></div>
<span class="t" style="left:1446.00px;width:121.5px;text-align:center;top:145.51px;font-size:10px;line-height:10px;letter-spacing:0px;color:#ececec;">Special Controls</span>
<div style="left:1559px;top:141.67px;width:117.40px;height:16.3px;background:linear-gradient(#a4a4a4,#808080 50%,#5e5e5e);border:1px solid #585858;border-radius:4px;"></div>
<span class="t" style="left:1549.00px;width:138px;text-align:center;top:145.51px;font-size:10px;line-height:10px;letter-spacing:0px;color:#ececec;">Date/Time Controls</span>
<div style="left:1314px;top:159.34px;width:104.10px;height:16.3px;background:linear-gradient(#a4a4a4,#808080 50%,#5e5e5e);border:1px solid #585858;border-radius:4px;"></div>
<span class="t" style="left:1304.00px;width:124.70000000000005px;text-align:center;top:163.18px;font-size:10px;line-height:10px;letter-spacing:0px;color:#ececec;">ImagePool_OEM</span>
<div style="left:1420px;top:159.34px;width:109.40px;height:16.3px;background:linear-gradient(#a4a4a4,#808080 50%,#5e5e5e);border:1px solid #585858;border-radius:4px;"></div>
<span class="t" style="left:1410.00px;width:130px;text-align:center;top:163.18px;font-size:10px;line-height:10px;letter-spacing:0px;color:#ececec;">ImagePoolDialogs</span>
<div style="left:1531.4px;top:159.34px;width:65.00px;height:16.3px;background:linear-gradient(#a4a4a4,#808080 50%,#5e5e5e);border:1px solid #585858;border-radius:4px;"></div>
<span class="t" style="left:1521.40px;width:85.59999999999991px;text-align:center;top:163.18px;font-size:10px;line-height:10px;letter-spacing:0px;color:#ececec;">IP_VUM</span>
<div style="left:1598.7px;top:159.34px;width:77.70px;height:16.3px;background:linear-gradient(#a4a4a4,#808080 50%,#5e5e5e);border:1px solid #585858;border-radius:4px;"></div>
<span class="t" style="left:1588.70px;width:98.29999999999995px;text-align:center;top:163.18px;font-size:10px;line-height:10px;letter-spacing:0px;color:#ececec;">ImagePool</span>
<div style="left:1314px;top:177.01px;width:106.40px;height:16.3px;background:linear-gradient(#a4a4a4,#808080 50%,#5e5e5e);border:1px solid #585858;border-radius:4px;"></div>
<span class="t" style="left:1304.00px;width:127px;text-align:center;top:180.84px;font-size:10px;line-height:10px;letter-spacing:0px;color:#ececec;">SaveanimationRound</span>
<div style="left:1422.3px;top:177.01px;width:109.10px;height:16.3px;background:linear-gradient(#a4a4a4,#808080 50%,#5e5e5e);border:1px solid #585858;border-radius:4px;"></div>
<span class="t" style="left:1412.30px;width:129.70000000000005px;text-align:center;top:180.84px;font-size:10px;line-height:10px;letter-spacing:0px;color:#ececec;">SaveanimationSquare</span>
<div style="left:1533.6px;top:177.01px;width:51.80px;height:16.3px;background:linear-gradient(#a4a4a4,#808080 50%,#5e5e5e);border:1px solid #585858;border-radius:4px;"></div>
<span class="t" style="left:1523.60px;width:72.40000000000009px;text-align:center;top:180.84px;font-size:10px;line-height:10px;letter-spacing:0px;color:#ececec;">Miniature</span>
<div style="left:1587.4px;top:177.01px;width:41.00px;height:16.3px;background:linear-gradient(#a4a4a4,#808080 50%,#5e5e5e);border:1px solid #585858;border-radius:4px;"></div>
<span class="t" style="left:1577.40px;width:61.59999999999991px;text-align:center;top:180.84px;font-size:10px;line-height:10px;letter-spacing:0px;color:#ececec;">Round</span>
<div style="left:1630px;top:177.01px;width:46.40px;height:16.3px;background:linear-gradient(#a4a4a4,#808080 50%,#5e5e5e);border:1px solid #585858;border-radius:4px;"></div>
<span class="t" style="left:1620.00px;width:67px;text-align:center;top:180.84px;font-size:10px;line-height:10px;letter-spacing:0px;color:#ececec;">Square</span>
<div style="left:1314px;top:194.68px;width:82.40px;height:16.3px;background:linear-gradient(#a4a4a4,#808080 50%,#5e5e5e);border:1px solid #585858;border-radius:4px;"></div>
<span class="t" style="left:1304.00px;width:103px;text-align:center;top:198.52px;font-size:10px;line-height:10px;letter-spacing:0px;color:#ececec;">Background</span>
<div style="left:1398.4px;top:194.68px;width:74.00px;height:16.3px;background:linear-gradient(#a4a4a4,#808080 50%,#5e5e5e);border:1px solid #585858;border-radius:4px;"></div>
<span class="t" style="left:1388.40px;width:94.59999999999991px;text-align:center;top:198.52px;font-size:10px;line-height:10px;letter-spacing:0px;color:#ececec;">Checkbox</span>
<div style="left:1474px;top:194.68px;width:55.40px;height:16.3px;background:linear-gradient(#a4a4a4,#808080 50%,#5e5e5e);border:1px solid #585858;border-radius:4px;"></div>
<span class="t" style="left:1464.00px;width:76px;text-align:center;top:198.52px;font-size:10px;line-height:10px;letter-spacing:0px;color:#ececec;">Slider</span>
<div style="left:1531.4px;top:194.68px;width:145.00px;height:16.3px;background:linear-gradient(#a4a4a4,#808080 50%,#5e5e5e);border:1px solid #585858;border-radius:4px;"></div>
<span class="t" style="left:1521.40px;width:165.5999999999999px;text-align:center;top:198.52px;font-size:10px;line-height:10px;letter-spacing:0px;color:#ececec;">SquareNegativeDarkGrey</span>
<div style="left:1314px;top:212.35px;width:104.10px;height:16.3px;background:linear-gradient(#a4a4a4,#808080 50%,#5e5e5e);border:1px solid #585858;border-radius:4px;"></div>
<span class="t" style="left:1304.00px;width:124.70000000000005px;text-align:center;top:216.19px;font-size:10px;line-height:10px;letter-spacing:0px;color:#ececec;">SquareNegativeGrey</span>
<div style="left:1420px;top:212.35px;width:49.40px;height:16.3px;background:linear-gradient(#a4a4a4,#808080 50%,#5e5e5e);border:1px solid #585858;border-radius:4px;"></div>
<span class="t" style="left:1410.00px;width:70px;text-align:center;top:216.19px;font-size:10px;line-height:10px;letter-spacing:0px;color:#ececec;">Symbols</span>
<div style="left:1471.7px;top:212.35px;width:76.70px;height:16.3px;background:linear-gradient(#a4a4a4,#808080 50%,#5e5e5e);border:1px solid #585858;border-radius:4px;"></div>
<span class="t" style="left:1461.70px;width:97.29999999999995px;text-align:center;top:216.19px;font-size:10px;line-height:10px;letter-spacing:0px;color:#ececec;">Current project</span>
<div style="left:1550.3px;top:212.35px;width:56.60px;height:16.3px;background:linear-gradient(#a4a4a4,#808080 50%,#5e5e5e);border:1px solid #585858;border-radius:4px;"></div>
<span class="t" style="left:1540.30px;width:77.20000000000005px;text-align:center;top:216.19px;font-size:10px;line-height:10px;letter-spacing:0px;color:#ececec;">JCmpVisu</span>
<div style="left:1609px;top:212.35px;width:67.40px;height:16.3px;background:linear-gradient(#a4a4a4,#808080 50%,#5e5e5e);border:1px solid #585858;border-radius:4px;"></div>
<span class="t" style="left:1599.00px;width:88px;text-align:center;top:216.19px;font-size:10px;line-height:10px;letter-spacing:0px;color:#ececec;">VisuDialogs</span>
<div style="left:1314px;top:230.02px;width:113.40px;height:16.3px;background:linear-gradient(#a4a4a4,#808080 50%,#5e5e5e);border:1px solid #585858;border-radius:4px;"></div>
<span class="t" style="left:1304.00px;width:134px;text-align:center;top:233.86px;font-size:10px;line-height:10px;letter-spacing:0px;color:#ececec;">VisuUserManagement</span>
<div style="left:1430px;top:230.02px;width:72.10px;height:16.3px;background:linear-gradient(#a4a4a4,#808080 50%,#5e5e5e);border:1px solid #585858;border-radius:4px;"></div>
<span class="t" style="left:1420.00px;width:92.70000000000005px;text-align:center;top:233.86px;font-size:10px;line-height:10px;letter-spacing:0px;color:#ececec;">JCmpPgVisu</span>
<div style="left:1504.5px;top:230.02px;width:84.90px;height:16.3px;background:linear-gradient(#62d062,#2fa02f);border:1px solid #3a8a3a;border-radius:4px;"></div>
<span class="t" style="left:1494.50px;width:105.5px;text-align:center;top:233.86px;font-size:10px;line-height:10px;letter-spacing:0px;color:#ececec;">JCmpVisuBasic</span>
<div style="left:1591.3px;top:230.02px;width:85.10px;height:16.3px;background:linear-gradient(#a4a4a4,#808080 50%,#5e5e5e);border:1px solid #585858;border-radius:4px;"></div>
<span class="t" style="left:1581.30px;width:105.70000000000005px;text-align:center;top:233.86px;font-size:10px;line-height:10px;letter-spacing:0px;color:#ececec;">JCmpVisuTime</span>
<div style="left:1314px;top:247.69px;width:362.40px;height:16.3px;background:linear-gradient(#a4a4a4,#808080 50%,#5e5e5e);border:1px solid #585858;border-radius:4px;"></div>
<span class="t" style="left:1304.00px;width:383px;text-align:center;top:251.53px;font-size:10px;line-height:10px;letter-spacing:0px;color:#ececec;">Favorite</span>
<div style="left:1313px;top:264px;width:364px;height:7px;background:#f6f6f6;"></div>
<div style="left:1313px;top:265px;width:364px;height:1px;background:#cfcfcf;"></div>
<div style="left:1313px;top:267px;width:364px;height:1px;background:#c4c4c4;"></div>
<svg style="position:absolute;overflow:visible;left:1486px;top:267px;" width="22" height="4" viewBox="0 0 22 4"><path d="M0.5 3.5l3-3 3 3" fill="none" stroke="#999"/><path d="M13 0.5h7l-3.5 3z" fill="#777"/></svg>
<div style="left:1313px;top:270px;width:364px;height:771px;background:#fff;border:1px solid #a0a5ad;"></div>
<div style="left:1660px;top:271px;width:15px;height:769px;background:#f0f0f0;"></div>
<div style="left:1661px;top:706px;width:11px;height:321px;background:#cdcdcd;"></div>
<svg style="position:absolute;overflow:visible;left:1662px;top:276px;" width="9" height="6" viewBox="0 0 9 6"><path d="M0.5 5L4.5 1l4 4" stroke="#333" fill="none" stroke-width="1.3"/></svg>
<svg style="position:absolute;overflow:visible;left:1662px;top:1030px;" width="9" height="6" viewBox="0 0 9 6"><path d="M0.5 1L4.5 5l4-4" stroke="#333" fill="none" stroke-width="1.3"/></svg>
<span class="t" style="left:1315.00px;width:110px;text-align:center;top:279.98px;font-size:9px;line-height:9px;letter-spacing:0.12px;color:#222;">OutputstDintValue</span>
<span class="t" style="left:1421.50px;width:110px;text-align:center;top:279.98px;font-size:9px;line-height:9px;letter-spacing:0.12px;color:#222;">OutputRealValue</span>
<span class="t" style="left:1528.00px;width:110px;text-align:center;top:279.98px;font-size:9px;line-height:9px;letter-spacing:0.12px;color:#222;">OutputLRealValue</span>
<div style="left:1354px;top:321px;width:30px;height:20px;background:#eef0f2;border:1.5px solid #1a4a9a;border-top-width:2px;border-bottom-width:3px;"></div>
<div style="left:1364.0px;top:325px;width:8px;height:12px;background:repeating-linear-gradient(90deg,transparent 0 2px,#bbb 2px 2.6px),repeating-linear-gradient(#151515 0 2px,#aaa 2px 2.8px);"></div>
<div style="left:1372.0px;top:326px;width:4px;height:8px;background:repeating-linear-gradient(#2a5ab0 0 2px,#9ab 2px 2.6px);"></div>
<div style="left:1460px;top:321px;width:30px;height:20px;background:#eef0f2;border:1.5px solid #1a4a9a;border-top-width:2px;border-bottom-width:3px;"></div>
<div style="left:1470.0px;top:325px;width:8px;height:12px;background:repeating-linear-gradient(90deg,transparent 0 2px,#bbb 2px 2.6px),repeating-linear-gradient(#151515 0 2px,#aaa 2px 2.8px);"></div>
<div style="left:1478.0px;top:326px;width:4px;height:8px;background:repeating-linear-gradient(#2a5ab0 0 2px,#9ab 2px 2.6px);"></div>
<div style="left:1562px;top:319px;width:37px;height:24px;background:#eef0f2;border:1.5px solid #1a4a9a;border-top-width:2px;border-bottom-width:3px;"></div>
<div style="left:1575.5px;top:323px;width:8px;height:16px;background:repeating-linear-gradient(90deg,transparent 0 2px,#bbb 2px 2.6px),repeating-linear-gradient(#151515 0 2px,#aaa 2px 2.8px);"></div>
<div style="left:1583.5px;top:324px;width:4px;height:12px;background:repeating-linear-gradient(#2a5ab0 0 2px,#9ab 2px 2.6px);"></div>
<span class="t" style="left:1315.00px;width:110px;text-align:center;top:354.73px;font-size:9px;line-height:9px;letter-spacing:0.12px;color:#222;">NumpadNetworkFull</span>
<span class="t" style="left:1421.50px;width:110px;text-align:center;top:354.73px;font-size:9px;line-height:9px;letter-spacing:0.12px;color:#222;">NumpadFull</span>
<span class="t" style="left:1528.00px;width:110px;text-align:center;top:354.73px;font-size:9px;line-height:9px;letter-spacing:0.12px;color:#222;">Numpad</span>
<div style="left:1354px;top:395px;width:29px;height:21px;background:#f0f2f4;border:1px solid #1a4a9a;border-top-width:2px;border-bottom-width:2px;"></div>
<div style="left:1355px;top:399px;width:27px;height:12px;background:repeating-linear-gradient(90deg,transparent 0 2px,#ccc 2px 2.6px),repeating-linear-gradient(#111 0 2px,#ccc 2px 2.8px);"></div>
<div style="left:1382px;top:399px;width:6px;height:12px;background:repeating-linear-gradient(90deg,transparent 0 2px,#ccc 2px 2.6px),repeating-linear-gradient(#111 0 2px,#ccc 2px 2.8px);"></div>
<div style="left:1460px;top:395px;width:29px;height:21px;background:#f0f2f4;border:1px solid #1a4a9a;border-top-width:2px;border-bottom-width:2px;"></div>
<div style="left:1461px;top:399px;width:27px;height:12px;background:repeating-linear-gradient(90deg,transparent 0 2px,#ccc 2px 2.6px),repeating-linear-gradient(#111 0 2px,#ccc 2px 2.8px);"></div>
<div style="left:1488px;top:399px;width:6px;height:12px;background:repeating-linear-gradient(90deg,transparent 0 2px,#ccc 2px 2.6px),repeating-linear-gradient(#111 0 2px,#ccc 2px 2.8px);"></div>
<div style="left:1562px;top:392px;width:36px;height:17px;background:#0b4a8f;"></div>
<span class="t" style="left:1315.00px;width:110px;text-align:center;top:429.48px;font-size:9px;line-height:9px;letter-spacing:0.12px;color:#222;">KeypadLoginFull</span>
<span class="t" style="left:1421.50px;width:110px;text-align:center;top:429.48px;font-size:9px;line-height:9px;letter-spacing:0.12px;color:#222;">KeypadFull</span>
<span class="t" style="left:1528.00px;width:110px;text-align:center;top:419.18px;font-size:9px;line-height:9px;letter-spacing:0.12px;color:#222;">KeypadButtonCmdIconBi</span>
<span class="t" style="left:1528.00px;width:110px;text-align:center;top:429.48px;font-size:9px;line-height:9px;letter-spacing:0.12px;color:#222;">g_152</span>
<div style="left:1350px;top:463.5px;width:37px;height:23px;background:#0b4a8f;"></div>
<div style="left:1456.5px;top:461.5px;width:39px;height:39px;background:#0b4a8f;"></div>
<div style="left:1562.5px;top:461.5px;width:39px;height:39px;background:#0b4a8f;"></div>
<span class="t" style="left:1562.00px;width:40px;text-align:center;top:473.84px;font-size:12px;line-height:12px;letter-spacing:0px;color:#fff;font-weight:bold;">%s</span>
<span class="t" style="left:1315.00px;width:110px;text-align:center;top:493.93px;font-size:9px;line-height:9px;letter-spacing:0.12px;color:#222;">KeypadButtonCmdIconBi</span>
<span class="t" style="left:1315.00px;width:110px;text-align:center;top:504.23px;font-size:9px;line-height:9px;letter-spacing:0.12px;color:#222;">g</span>
<span class="t" style="left:1421.50px;width:110px;text-align:center;top:504.23px;font-size:9px;line-height:9px;letter-spacing:0.12px;color:#222;">KeypadButtonCmdIcon</span>
<span class="t" style="left:1528.00px;width:110px;text-align:center;top:504.23px;font-size:9px;line-height:9px;letter-spacing:0.12px;color:#222;">KeypadButtonCmd</span>
<div style="left:1349.5px;top:535.5px;width:40px;height:39px;background:#efefef;border:1px solid #222;"></div>
<span class="t" style="left:1349.50px;width:40px;text-align:center;top:548.69px;font-size:11px;line-height:11px;letter-spacing:0px;color:#3a6ab0;">%s</span>
<div style="left:1456px;top:543px;width:35px;height:25px;background:#f0f2f4;border:1px solid #1a4a9a;border-top-width:2px;border-bottom-width:2px;"></div>
<div style="left:1457px;top:547px;width:33px;height:16px;background:repeating-linear-gradient(90deg,transparent 0 2px,#ccc 2px 2.6px),repeating-linear-gradient(#111 0 2px,#ccc 2px 2.8px);"></div>
<div style="left:1490px;top:547px;width:6px;height:16px;background:repeating-linear-gradient(90deg,transparent 0 2px,#ccc 2px 2.6px),repeating-linear-gradient(#111 0 2px,#ccc 2px 2.8px);"></div>
<div style="left:1562px;top:546px;width:33px;height:7px;background:#fff;border:1px solid #9a9a9a;"></div>
<div style="left:1575.5px;top:548px;width:5px;height:2px;background:#2a4a9a;"></div>
<span class="t" style="left:1315.00px;width:110px;text-align:center;top:578.98px;font-size:9px;line-height:9px;letter-spacing:0.12px;color:#222;">KeypadButtonChar</span>
<span class="t" style="left:1421.50px;width:110px;text-align:center;top:578.98px;font-size:9px;line-height:9px;letter-spacing:0.12px;color:#222;">Keypad</span>
<span class="t" style="left:1528.00px;width:110px;text-align:center;top:568.68px;font-size:9px;line-height:9px;letter-spacing:0.12px;color:#222;">InputstFloatValueTwoCo</span>
<span class="t" style="left:1528.00px;width:110px;text-align:center;top:578.98px;font-size:9px;line-height:9px;letter-spacing:0.12px;color:#222;">mma</span>
<div style="left:1349.5px;top:621px;width:33px;height:7px;background:#fff;border:1px solid #9a9a9a;"></div>
<div style="left:1363.0px;top:623px;width:5px;height:2px;background:#2a4a9a;"></div>
<div style="left:1456.0px;top:621px;width:33px;height:7px;background:#fff;border:1px solid #9a9a9a;"></div>
<div style="left:1469.5px;top:623px;width:5px;height:2px;background:#2a4a9a;"></div>
<div style="left:1562.5px;top:621px;width:33px;height:7px;background:#fff;border:1px solid #9a9a9a;"></div>
<div style="left:1576.0px;top:623px;width:5px;height:2px;background:#2a4a9a;"></div>
<span class="t" style="left:1315.00px;width:110px;text-align:center;top:643.43px;font-size:9px;line-height:9px;letter-spacing:0.12px;color:#222;">InputstFloatValueThreeC</span>
<span class="t" style="left:1315.00px;width:110px;text-align:center;top:653.73px;font-size:9px;line-height:9px;letter-spacing:0.12px;color:#222;">omma</span>
<span class="t" style="left:1421.50px;width:110px;text-align:center;top:643.43px;font-size:9px;line-height:9px;letter-spacing:0.12px;color:#222;">InputstFloatValueOneCo</span>
<span class="t" style="left:1421.50px;width:110px;text-align:center;top:653.73px;font-size:9px;line-height:9px;letter-spacing:0.12px;color:#222;">mma</span>
<span class="t" style="left:1528.00px;width:110px;text-align:center;top:643.43px;font-size:9px;line-height:9px;letter-spacing:0.12px;color:#222;">InputstFloatValueNoCom</span>
<span class="t" style="left:1528.00px;width:110px;text-align:center;top:653.73px;font-size:9px;line-height:9px;letter-spacing:0.12px;color:#222;">ma</span>
<div style="left:1349.5px;top:701.5px;width:33px;height:7px;background:#fff;border:1px solid #9a9a9a;"></div>
<div style="left:1363.0px;top:703.5px;width:5px;height:2px;background:#2a4a9a;"></div>
<div style="left:1456.0px;top:701.5px;width:33px;height:7px;background:#fff;border:1px solid #9a9a9a;"></div>
<div style="left:1469.5px;top:703.5px;width:5px;height:2px;background:#2a4a9a;"></div>
<div style="left:1562.5px;top:701.5px;width:33px;height:7px;background:#fff;border:1px solid #9a9a9a;"></div>
<div style="left:1576.0px;top:703.5px;width:5px;height:2px;background:#2a4a9a;"></div>
<span class="t" style="left:1315.00px;width:110px;text-align:center;top:728.48px;font-size:9px;line-height:9px;letter-spacing:0.12px;color:#222;">InputstDoubleValueBase</span>
<span class="t" style="left:1421.50px;width:110px;text-align:center;top:728.48px;font-size:9px;line-height:9px;letter-spacing:0.12px;color:#222;">InputstDoubleValue</span>
<span class="t" style="left:1528.00px;width:110px;text-align:center;top:728.48px;font-size:9px;line-height:9px;letter-spacing:0.12px;color:#222;">InputstDintValue</span>
<div style="left:1349.5px;top:776px;width:33px;height:7px;background:#fff;border:1px solid #9a9a9a;"></div>
<div style="left:1363.0px;top:778px;width:5px;height:2px;background:#2a4a9a;"></div>
<div style="left:1456.0px;top:776px;width:33px;height:7px;background:#fff;border:1px solid #9a9a9a;"></div>
<div style="left:1469.5px;top:778px;width:5px;height:2px;background:#2a4a9a;"></div>
<div style="left:1562.5px;top:776px;width:33px;height:7px;background:#fff;border:1px solid #9a9a9a;"></div>
<div style="left:1576.0px;top:778px;width:5px;height:2px;background:#2a4a9a;"></div>
<span class="t" style="left:1315.00px;width:110px;text-align:center;top:803.23px;font-size:9px;line-height:9px;letter-spacing:0.12px;color:#222;">InputULINT</span>
<span class="t" style="left:1421.50px;width:110px;text-align:center;top:803.23px;font-size:9px;line-height:9px;letter-spacing:0.12px;color:#222;">InputUINT</span>
<span class="t" style="left:1528.00px;width:110px;text-align:center;top:803.23px;font-size:9px;line-height:9px;letter-spacing:0.12px;color:#222;">InputUDINT</span>
<div style="left:1349.5px;top:851px;width:33px;height:7px;background:#fff;border:1px solid #9a9a9a;"></div>
<div style="left:1363.0px;top:853px;width:5px;height:2px;background:#2a4a9a;"></div>
<div style="left:1456.0px;top:846px;width:33px;height:7px;background:#fff;border:1px solid #9a9a9a;"></div>
<div style="left:1469.5px;top:848px;width:5px;height:2px;background:#2a4a9a;"></div>
<div style="left:1562.5px;top:851px;width:33px;height:7px;background:#fff;border:1px solid #9a9a9a;"></div>
<div style="left:1576.0px;top:853px;width:5px;height:2px;background:#2a4a9a;"></div>
<span class="t" style="left:1315.00px;width:110px;text-align:center;top:877.98px;font-size:9px;line-height:9px;letter-spacing:0.12px;color:#222;">InputRealValue</span>
<span class="t" style="left:1421.50px;width:110px;text-align:center;top:867.68px;font-size:9px;line-height:9px;letter-spacing:0.12px;color:#222;">InputRealValueTwoCom</span>
<span class="t" style="left:1421.50px;width:110px;text-align:center;top:877.98px;font-size:9px;line-height:9px;letter-spacing:0.12px;color:#222;">ma</span>
<span class="t" style="left:1528.00px;width:110px;text-align:center;top:877.98px;font-size:9px;line-height:9px;letter-spacing:0.12px;color:#222;">InputNetwork</span>
<div style="left:1349.5px;top:925.5px;width:33px;height:7px;background:#fff;border:1px solid #9a9a9a;"></div>
<div style="left:1363.0px;top:927.5px;width:5px;height:2px;background:#2a4a9a;"></div>
<div style="left:1456.0px;top:925.5px;width:33px;height:7px;background:#fff;border:1px solid #9a9a9a;"></div>
<div style="left:1469.5px;top:927.5px;width:5px;height:2px;background:#2a4a9a;"></div>
<div style="left:1562.5px;top:925.5px;width:33px;height:7px;background:#fff;border:1px solid #9a9a9a;"></div>
<div style="left:1576.0px;top:927.5px;width:5px;height:2px;background:#2a4a9a;"></div>
<span class="t" style="left:1315.00px;width:110px;text-align:center;top:952.73px;font-size:9px;line-height:9px;letter-spacing:0.12px;color:#222;">InputLRealValue</span>
<span class="t" style="left:1421.50px;width:110px;text-align:center;top:952.73px;font-size:9px;line-height:9px;letter-spacing:0.12px;color:#222;">InputInt</span>
<span class="t" style="left:1528.00px;width:110px;text-align:center;top:952.73px;font-size:9px;line-height:9px;letter-spacing:0.12px;color:#222;">InputDINT</span>
<div style="left:1350px;top:993.5px;width:38px;height:9px;background:#eceeee;"></div>
<svg style="position:absolute;overflow:visible;left:1351px;top:995px;" width="8" height="6" viewBox="0 0 8 6"><rect x="0.5" y="0.5" width="6" height="5" fill="#dde" stroke="#7a8ab0"/><path d="M1.5 3l2 1.5 2.5-3" stroke="#3a5ab0" fill="none"/></svg>
<div style="left:1362px;top:996px;width:4px;height:2px;background:#2a4a9a;"></div>
<div style="left:1456px;top:1003px;width:40px;height:1px;background:#e8e8e8;"></div>
<div style="left:1561px;top:1003px;width:41px;height:1px;background:#ececec;"></div>
<span class="t" style="left:1315.00px;width:110px;text-align:center;top:1017.18px;font-size:9px;line-height:9px;letter-spacing:0.12px;color:#222;">ButtonWithCheckboxSm</span>
<span class="t" style="left:1315.00px;width:110px;text-align:center;top:1027.48px;font-size:9px;line-height:9px;letter-spacing:0.12px;color:#222;">all</span>
<span class="t" style="left:1421.50px;width:110px;text-align:center;top:1027.48px;font-size:9px;line-height:9px;letter-spacing:0.12px;color:#222;">ButtonWithCheckbox</span>
<span class="t" style="left:1528.00px;width:110px;text-align:center;top:1027.48px;font-size:9px;line-height:9px;letter-spacing:0.12px;color:#222;">Button</span>
<div style="left:1419px;top:913px;width:117px;height:74px;border:3px solid #f00c0c;"></div>
<div style="left:1323px;top:1055px;width:71px;height:2px;background:#dcdcdc;"></div>
<svg style="position:absolute;overflow:visible;left:1334px;top:1048px;" width="10" height="18" viewBox="0 0 10 18"><path d="M0.5 0.5h9v12l-4.5 5-4.5-5z" fill="#1e73d2"/></svg>
<div style="left:1400px;top:1048px;width:16px;height:16px;background:#c6c6c6;"></div>
<svg style="position:absolute;overflow:visible;left:1402px;top:1050px;" width="12" height="12" viewBox="0 0 12 12"><circle cx="5" cy="5" r="3.5" fill="none" stroke="#fff" stroke-width="1.5"/><path d="M7.5 7.5l3.5 3.5" stroke="#fff" stroke-width="2"/></svg>
<div style="left:1416px;top:1048px;width:202px;height:16px;background:#fff;border:1px solid #a8a8a8;"></div>
<span class="t " style="left:1641px;top:1050.38px;font-size:9px;line-height:9px;letter-spacing:0.05px;color:#222;">72 items</span>
<div style="left:1313px;top:1069px;width:364px;height:1px;background:#b8b8b8;"></div>
<svg style="position:absolute;overflow:visible;left:1315px;top:1071px;" width="14" height="15" viewBox="0 0 14 15"><rect x="1.5" y="4.5" width="11" height="9" fill="#eee" stroke="#222"/><path d="M3 2h8v3H3z" fill="#ccc" stroke="#222"/><path d="M4 8h6M4 11h6M7 7v6" stroke="#444"/><rect x="11" y="1" width="3" height="4" fill="#2030c0"/></svg>
<span class="t " style="left:1331px;top:1075.38px;font-size:9px;line-height:9px;letter-spacing:-0.1px;color:#888;">Properties</span>
<div style="left:1375.5px;top:1070px;width:102px;height:18px;background:#fff;border:1px solid #b8b8b8;border-top:none;border-radius:0 0 3px 3px;"></div>
<svg style="position:absolute;overflow:visible;left:1378px;top:1072px;" width="13" height="13" viewBox="0 0 13 13"><path d="M2.5 0.5h7l2 2v10h-9z" fill="#fff" stroke="#333"/><path d="M3 12.5h9" stroke="#888"/><rect x="4" y="1.5" width="4" height="4" fill="#f0d000" stroke="#e02020"/><rect x="4" y="5.5" width="4" height="4" fill="#c02080" stroke="#e02020"/><rect x="0.5" y="5.5" width="4" height="4" fill="#e8e800" stroke="#20b020"/></svg>
<span class="t " style="left:1394px;top:1075.21px;font-size:9.2px;line-height:9.2px;letter-spacing:-0.2px;color:#111;">Visualization Toolbox</span>
<div style="left:2px;top:1089px;width:1675px;height:17px;background:#f5f5f5;"></div>
<div style="left:261px;top:1088px;width:1049px;height:1px;background:#b4b4b4;"></div>
<div style="left:3px;top:1090px;width:250px;height:17px;background:#f2f2f2;border:1px solid #a8a8a8;border-bottom:none;border-radius:3px 3px 0 0;"></div>
<svg style="position:absolute;overflow:visible;left:6px;top:1093px;" width="10" height="11" viewBox="0 0 10 11"><rect x="0.5" y="0.5" width="9" height="10" fill="#eee" stroke="#333"/><rect x="0" y="0" width="10" height="2" fill="#1a2a90"/><path d="M2 5h6" stroke="#888" stroke-width="2"/></svg>
<span class="t " style="left:23px;top:1094.13px;font-size:9.3px;line-height:9.3px;letter-spacing:0px;color:#777;">Messages - Total 0 error(s), 0 warning(s), 9 message(s)</span>
<div style="left:2px;top:1106px;width:1676px;height:1px;background:#e4e4e4;"></div>
<div style="left:2px;top:1107px;width:1675px;height:16px;background:#f0f0f0;"></div>
<div style="left:2px;top:1122px;width:1675px;height:1px;background:#fafafa;"></div>
<div style="left:1202px;top:1108px;width:1px;height:14px;background:#dcdcdc;"></div>
<div style="left:1220px;top:1108px;width:1px;height:14px;background:#dcdcdc;"></div>
<div style="left:1430px;top:1108px;width:1px;height:14px;background:#dcdcdc;"></div>
<div style="left:1448px;top:1108px;width:1px;height:14px;background:#dcdcdc;"></div>
<div style="left:1642px;top:1108px;width:1px;height:14px;background:#dcdcdc;"></div>
<svg style="position:absolute;overflow:visible;left:1205px;top:1109px;" width="14" height="10" viewBox="0 0 14 10"><path d="M3 9a3 3 0 0 1 0-6a4 4 0 0 1 7.5-1a3 3 0 0 1 1 7z" fill="#fff" stroke="#e02030" stroke-width="1.2"/><circle cx="5" cy="6" r="1.3" fill="#e02030"/><circle cx="9" cy="6" r="1.3" fill="#e02030"/></svg>
<span class="t " style="left:1246.5px;top:1111.38px;font-size:9px;line-height:9px;letter-spacing:0px;color:#111;">Last build:</span>
<svg style="position:absolute;overflow:visible;left:1291px;top:1110px;" width="10" height="10" viewBox="0 0 10 10"><circle cx="5" cy="5" r="4.5" fill="#e01020"/><path d="M3 3l4 4M7 3L3 7" stroke="#fff" stroke-width="1.3"/></svg>
<span class="t " style="left:1305px;top:1111.38px;font-size:9px;line-height:9px;letter-spacing:0px;color:#111;">0</span>
<svg style="position:absolute;overflow:visible;left:1314px;top:1110px;" width="10" height="10" viewBox="0 0 10 10"><circle cx="5" cy="5" r="4.5" fill="#f0e020" stroke="#555" stroke-width="0.6"/><path d="M5 2.5v4" stroke="#111" stroke-width="1.4"/><circle cx="5" cy="3.5" r="1.2" fill="#111"/></svg>
<span class="t " style="left:1328px;top:1111.38px;font-size:9px;line-height:9px;letter-spacing:0px;color:#111;">0</span>
<span class="t " style="left:1351.5px;top:1111.38px;font-size:9px;line-height:9px;letter-spacing:-0.4px;color:#111;">Precompile</span>
<svg style="position:absolute;overflow:visible;left:1395px;top:1109px;" width="15" height="11" viewBox="0 0 15 11"><path d="M1 6l4 4 9-9" stroke="#20a030" fill="none" stroke-width="2"/></svg>
<svg style="position:absolute;overflow:visible;left:1435px;top:1108px;" width="15" height="14" viewBox="0 0 15 14"><circle cx="5" cy="5" r="4" fill="none" stroke="#7a7ad0" stroke-width="2.5"/><circle cx="11" cy="3" r="2" fill="#18c818"/><rect x="6.5" y="7.5" width="7" height="6" fill="#dde" stroke="#335"/></svg>
<span class="t " style="left:1502px;top:1111.54px;font-size:9.4px;line-height:9.4px;letter-spacing:0px;color:#111;">Project user: (nobody)</span>
<svg style="position:absolute;overflow:visible;left:1646px;top:1108px;" width="12" height="13" viewBox="0 0 12 13"><path d="M6 0.5L11 2.5V6q0 4-5 6.5Q1 10 1 6V2.5z" fill="#f0e8a0" stroke="#444"/><path d="M6 1v11" stroke="#999"/></svg>
<div style="left:1673px;top:1113px;width:1.5px;height:1.5px;background:#aaa;"></div>
<div style="left:1670px;top:1116px;width:1.5px;height:1.5px;background:#aaa;"></div>
<div style="left:1673px;top:1116px;width:1.5px;height:1.5px;background:#aaa;"></div>
<div style="left:1667px;top:1119px;width:1.5px;height:1.5px;background:#aaa;"></div>
<div style="left:1670px;top:1119px;width:1.5px;height:1.5px;background:#aaa;"></div>
<div style="left:1673px;top:1119px;width:1.5px;height:1.5px;background:#aaa;"></div>
<div style="left:0px;top:0px;width:1678px;height:1px;background:#3a4a5a;"></div>
<div style="left:0px;top:0px;width:1px;height:1125px;background:#24384e;"></div>
<div style="left:1px;top:0px;width:1px;height:1125px;background:#7d8896;"></div>
<div style="left:1677px;top:0px;width:1px;height:1125px;background:#24384e;"></div>
<div style="left:0px;top:1123px;width:1678px;height:2px;background:#1c2a3a;"></div>
</body></html>
